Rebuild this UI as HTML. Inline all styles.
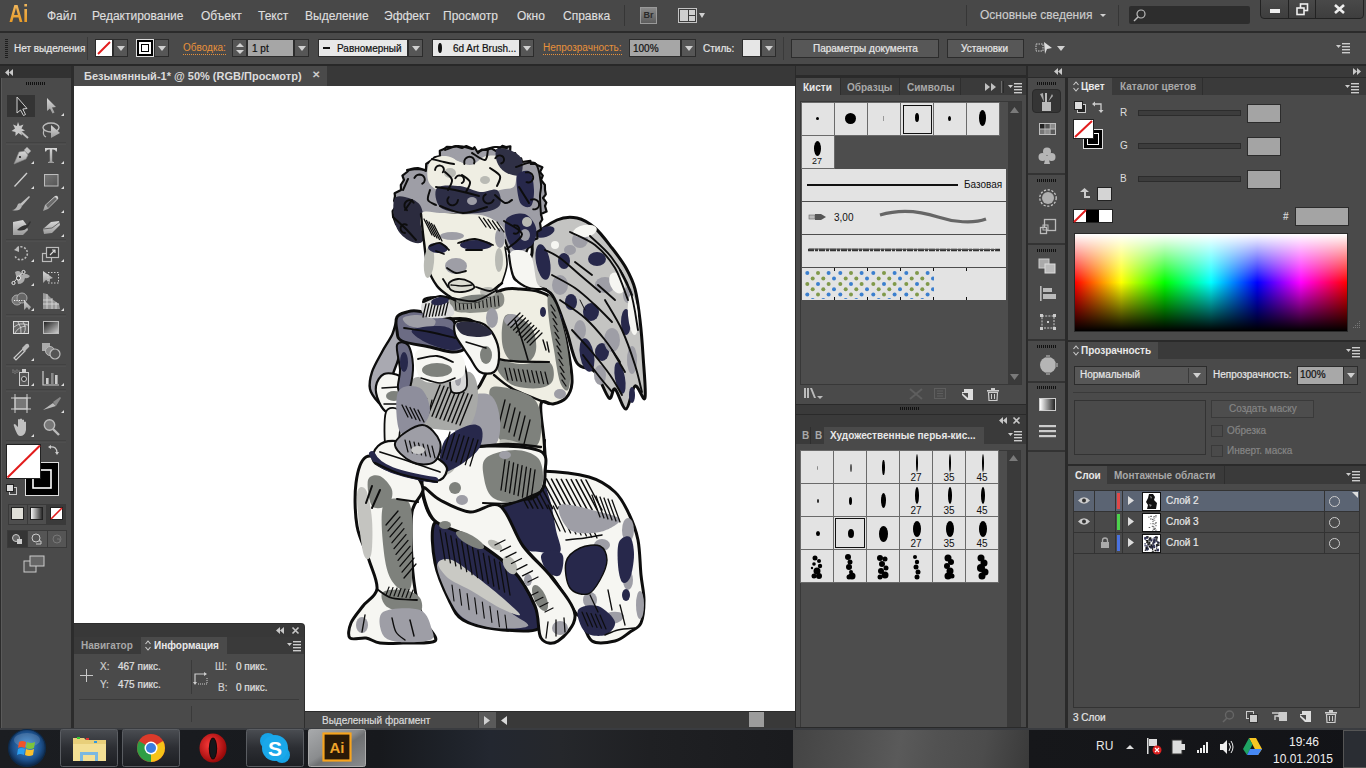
<!DOCTYPE html>
<html><head><meta charset="utf-8">
<style>
*{margin:0;padding:0;box-sizing:border-box}
html,body{width:1366px;height:768px;overflow:hidden;background:#4a4a4a;font-family:"Liberation Sans",sans-serif;color:#d6d6d6;position:relative}
.a{position:absolute}
.t{position:absolute;white-space:nowrap;line-height:1}
.menu{font-size:12px;color:#dedede;top:10px;-webkit-text-stroke:0.15px currentColor}
.cb{font-size:10px;color:#e6e6e6;-webkit-text-stroke:0.2px currentColor}
.or{font-size:10px;color:#e8913a;border-bottom:1px dotted #e8913a;padding-bottom:1px}
.fld{position:absolute;background:#a6a6a6;border:1px solid #2c2c2c}
.btn{position:absolute;background:#565656;border:1px solid #2c2c2c}
.arr{position:absolute;width:0;height:0;border-left:4px solid transparent;border-right:4px solid transparent;border-top:5px solid #d0d0d0}
.tab{position:absolute;font-size:10px;font-weight:bold;color:#a8a8a8;white-space:nowrap;line-height:1}
.act{color:#e8e8e8}
.cell{position:absolute;background:#e3e3e3}
svg{position:absolute;overflow:visible}
</style></head><body>
<!-- ============ MENU BAR ============ -->
<div class="a" style="left:0;top:0;width:1366px;height:31px;background:#484848"></div>
<div class="t" style="left:9px;top:3px;font-size:23px;font-weight:bold;color:#e69f35;transform:scaleX(0.84);transform-origin:0 0;background:linear-gradient(#f0b860,#e8961c);-webkit-background-clip:text;color:transparent">Ai</div>
<div class="t menu" style="left:47px">Файл</div>
<div class="t menu" style="left:92px">Редактирование</div>
<div class="t menu" style="left:201px">Объект</div>
<div class="t menu" style="left:258px">Текст</div>
<div class="t menu" style="left:305px">Выделение</div>
<div class="t menu" style="left:384px">Эффект</div>
<div class="t menu" style="left:443px">Просмотр</div>
<div class="t menu" style="left:517px">Окно</div>
<div class="t menu" style="left:563px">Справка</div>
<div class="a" style="left:624px;top:5px;width:1px;height:21px;background:#363636"></div>
<div class="a" style="left:640px;top:7px;width:17px;height:17px;background:linear-gradient(#8a8a8a,#5c5c5c);border:1px solid #9a9a9a;font-size:9px;color:#2a2a2a;text-align:center;line-height:15px;font-weight:bold">Br</div>
<div class="a" style="left:678px;top:8px;width:19px;height:15px;border:1px solid #c4c4c4;background:#3c3c3c"></div>
<div class="a" style="left:680px;top:10px;width:8px;height:11px;background:#cfcfcf"></div>
<div class="a" style="left:689px;top:10px;width:6px;height:5px;background:#cfcfcf"></div>
<div class="a" style="left:689px;top:16px;width:6px;height:5px;background:#cfcfcf"></div>
<div class="arr" style="left:699px;top:13px;border-width:5px 3px 0 3px"></div>
<div class="a" style="left:966px;top:5px;width:1px;height:21px;background:#363636"></div>
<div class="t menu" style="left:980px;top:9px;color:#cccccc">Основные сведения</div>
<div class="arr" style="left:1100px;top:14px;border-width:3px 3px 0 3px"></div>
<div class="a" style="left:1118px;top:5px;width:1px;height:21px;background:#363636"></div>
<div class="a" style="left:1129px;top:6px;width:121px;height:18px;background:#2d2d2d;border-radius:2px"></div>
<svg style="left:1133px;top:8px" width="14" height="14"><circle cx="8" cy="6" r="4" fill="none" stroke="#bbb" stroke-width="1.2"/><line x1="5" y1="9" x2="1" y2="13" stroke="#bbb" stroke-width="1.5"/></svg>
<!-- window buttons -->
<div class="a" style="left:1260px;top:-3px;width:104px;height:22px;background:linear-gradient(#4a4a4a,#3e3e3e);border:1px solid #222;border-radius:0 0 4px 4px"></div>
<div class="a" style="left:1288px;top:0px;width:1px;height:18px;background:#222"></div>
<div class="a" style="left:1315px;top:0px;width:1px;height:18px;background:#222"></div>
<div class="a" style="left:1270px;top:9px;width:10px;height:4px;background:#eee"></div>
<svg style="left:1296px;top:3px" width="13" height="12"><rect x="4.5" y="1" width="7" height="6.5" fill="none" stroke="#eee" stroke-width="1.6"/><rect x="1" y="5" width="7" height="6.5" fill="#444" stroke="#eee" stroke-width="1.6"/></svg>
<svg style="left:1334px;top:4px" width="11" height="10"><path d="M1 1L10 9M10 1L1 9" stroke="#eee" stroke-width="2.6"/></svg>
<!-- ============ CONTROL BAR ============ -->
<div class="a" style="left:0;top:31px;width:1366px;height:2px;background:#2b2b2b"></div>
<div class="a" style="left:0;top:33px;width:1366px;height:31px;background:#4a4a4a"></div>
<div class="a" style="left:0;top:64px;width:1366px;height:2px;background:#282828"></div>
<div class="a" style="left:5px;top:39px;width:3px;height:19px;background:repeating-linear-gradient(#1e1e1e 0 1px,transparent 1px 2px)"></div>
<div class="t cb" style="left:14px;top:44px">Нет выделения</div>
<div class="a" style="left:87px;top:37px;width:1px;height:23px;background:#3a3a3a"></div>
<div class="a" style="left:95px;top:39px;width:18px;height:18px;background:#fff;border:1px solid #2a2a2a"></div>
<svg style="left:96px;top:40px" width="16" height="16"><line x1="2" y1="14" x2="14" y2="2" stroke="#e21c1c" stroke-width="2"/></svg>
<div class="btn" style="left:113px;top:39px;width:15px;height:18px"></div><div class="arr" style="left:117px;top:46px"></div>
<div class="a" style="left:136px;top:39px;width:18px;height:18px;background:#000;border:1px solid #ddd"></div>
<div class="a" style="left:139px;top:42px;width:12px;height:12px;border:2px solid #fff"></div><div class="a" style="left:142px;top:45px;width:6px;height:6px;background:#fff"></div>
<div class="btn" style="left:154px;top:39px;width:15px;height:18px"></div><div class="arr" style="left:158px;top:46px"></div>
<div class="t or" style="left:183px;top:43px">Обводка:</div>
<div class="btn" style="left:232px;top:39px;width:15px;height:18px"></div>
<div class="arr" style="left:236px;top:43px;border-top:0;border-bottom:4px solid #cfcfcf"></div>
<div class="arr" style="left:236px;top:50px;border-top:4px solid #cfcfcf"></div>
<div class="fld" style="left:247px;top:39px;width:47px;height:18px"></div>
<div class="t cb" style="left:252px;top:44px;color:#111">1 pt</div>
<div class="btn" style="left:294px;top:39px;width:15px;height:18px"></div><div class="arr" style="left:298px;top:46px"></div>
<div class="a" style="left:318px;top:39px;width:90px;height:18px;background:#e8e8e8;border:1px solid #2c2c2c"></div>
<div class="a" style="left:323px;top:47px;width:7px;height:2px;background:#111"></div>
<div class="t cb" style="left:337px;top:44px;color:#111">Равномерный</div>
<div class="btn" style="left:408px;top:39px;width:15px;height:18px"></div><div class="arr" style="left:412px;top:46px"></div>
<div class="a" style="left:432px;top:39px;width:88px;height:18px;background:#e8e8e8;border:1px solid #2c2c2c"></div>
<div class="a" style="left:438px;top:43px;width:4px;height:10px;background:#111;border-radius:50%"></div>
<div class="t cb" style="left:453px;top:44px;color:#111">6d Art Brush...</div>
<div class="btn" style="left:520px;top:39px;width:14px;height:18px"></div><div class="arr" style="left:523px;top:46px"></div>
<div class="t or" style="left:543px;top:43px">Непрозрачность:</div>
<div class="fld" style="left:629px;top:39px;width:52px;height:18px"></div>
<div class="t cb" style="left:633px;top:44px;color:#111">100%</div>
<div class="btn" style="left:681px;top:39px;width:15px;height:18px"></div><div class="arr" style="left:685px;top:46px"></div>
<div class="t cb" style="left:703px;top:44px">Стиль:</div>
<div class="a" style="left:742px;top:39px;width:19px;height:18px;background:#e6e6e6;border:1px solid #2c2c2c"></div>
<div class="btn" style="left:761px;top:39px;width:15px;height:18px"></div><div class="arr" style="left:765px;top:46px"></div>
<div class="a" style="left:783px;top:37px;width:1px;height:23px;background:#3a3a3a"></div>
<div class="btn" style="left:791px;top:39px;width:148px;height:19px;background:#575757"></div>
<div class="t cb" style="left:813px;top:44px">Параметры документа</div>
<div class="btn" style="left:947px;top:39px;width:77px;height:19px;background:#575757"></div>
<div class="t cb" style="left:961px;top:44px">Установки</div>
<svg style="left:1035px;top:41px" width="20" height="14"><rect x="1" y="3" width="7" height="7" fill="none" stroke="#ccc" stroke-dasharray="1.5 1"/><path d="M9 1 L17 7 L12 8 L10 13 Z" fill="#ddd"/></svg>
<div class="arr" style="left:1057px;top:46px"></div>
<svg style="left:1336px;top:43px" width="14" height="10"><path d="M0 2 L5 2 L2.5 5Z" fill="#ccc"/><rect x="6" y="0" width="8" height="1.4" fill="#ccc"/><rect x="6" y="3" width="8" height="1.4" fill="#ccc"/><rect x="6" y="6" width="8" height="1.4" fill="#ccc"/><rect x="6" y="9" width="8" height="1.4" fill="#ccc"/></svg>

<!-- ============ LEFT TOOLBAR ============ -->
<div class="a" style="left:0;top:66px;width:74px;height:662px;background:#2c2c2c"></div>
<div class="a" style="left:0;top:66px;width:71px;height:12px;background:#323232"></div>
<svg style="left:5px;top:69px" width="8" height="7"><path d="M4 0L0 3.5L4 7Z M8 0L4 3.5L8 7Z" fill="#c8c8c8"/></svg>
<div class="a" style="left:1px;top:78px;width:70px;height:650px;background:#4a4a4a;border-left:1px solid #5a5a5a"></div>
<div class="a" style="left:26px;top:82px;width:20px;height:3px;background:repeating-linear-gradient(90deg,#111 0 1px,transparent 1px 2px)"></div>


<svg style="left:0;top:0" width="74" height="728">
<defs><linearGradient id="gi" x1="0" y1="0" x2="0" y2="1"><stop offset="0" stop-color="#d8d8d8"/><stop offset="1" stop-color="#9a9a9a"/></linearGradient>
<linearGradient id="gr" x1="0" y1="0" x2="1" y2="1"><stop offset="0" stop-color="#777"/><stop offset="1" stop-color="#555"/></linearGradient></defs>
<!-- selection active -->
<rect x="7" y="95" width="28" height="22" fill="#343434"/>
<path d="M17 97 L17 113 L20.5 110 L23.5 115.5 L25.5 114.5 L22.8 109 L27 108.5 Z" fill="#2c2c2c" stroke="#d0d0d0" stroke-width="1"/>
<path d="M47 98 L47 111 L50 108.5 L52.5 113.5 L54.5 112.5 L52 107.5 L56 107 Z" fill="url(#gi)"/>
<g fill="#ddd"><path d="M61 116 L64 113 L64 116Z"/><path d="M31 164 L34 161 L34 164Z"/><path d="M61 164 L64 161 L64 164Z"/><path d="M31 189 L34 186 L34 189Z"/><path d="M61 189 L64 186 L64 189Z"/><path d="M61 213 L64 210 L64 213Z"/><path d="M61 237 L64 234 L64 237Z"/><path d="M31 262 L34 259 L34 262Z"/><path d="M61 262 L64 259 L64 262Z"/><path d="M31 286 L34 283 L34 286Z"/><path d="M31 311 L34 308 L34 311Z"/><path d="M61 311 L64 308 L64 311Z"/><path d="M31 361 L34 358 L34 361Z"/><path d="M31 386 L34 383 L34 386Z"/><path d="M61 386 L64 383 L64 386Z"/><path d="M61 413 L64 410 L64 413Z"/><path d="M31 437 L34 434 L34 437Z"/></g>
<!-- magic wand -->
<path d="M18 122 L19.5 126 L23.5 124.5 L21.5 128.5 L25 130.5 L21 131.5 L22 135.5 L18.5 133 L15.5 136 L15.5 132 L11.5 131 L15 128.5 L13 124.5 L16.8 126Z" fill="#c8c8c8"/>
<line x1="20" y1="131" x2="28" y2="138" stroke="#bdbdbd" stroke-width="2"/>
<!-- lasso -->
<ellipse cx="51" cy="127.5" rx="8" ry="4.5" fill="none" stroke="#bbb" stroke-width="1.4"/>
<path d="M44 130 Q42 135 46 137" fill="none" stroke="#bbb" stroke-width="1.2"/>
<path d="M51 125 L51 138 L60 133 Z" fill="url(#gi)"/>
<line x1="6" y1="143" x2="66" y2="143" stroke="#3a3a3a" stroke-width="1"/>
<line x1="6" y1="144" x2="66" y2="144" stroke="#555" stroke-width="1"/>
<!-- pen -->
<path d="M14 164 L19 152 L25 151 L28 155 L26 159 Z" fill="url(#gi)" stroke="#888" stroke-width=".6"/>
<path d="M24 150 L27 147 L31 151 L28 154Z" fill="#c0c0c0"/>
<circle cx="20" cy="157" r="1.1" fill="#222"/>
<!-- T -->
<path d="M45 148 H57 V151.5 H56 Q55.5 149.5 53 149.5 H52.2 V161 Q52.2 162 54 162 V163 H48 V162 Q49.8 162 49.8 161 V149.5 H49 Q46.5 149.5 46 151.5 H45Z" fill="url(#gi)"/>
<!-- line -->
<line x1="14.5" y1="186.5" x2="27" y2="173" stroke="#cfcfcf" stroke-width="1.3"/>
<!-- rect -->
<rect x="44.5" y="174.5" width="13.5" height="11.5" fill="url(#gr)" stroke="#bdbdbd" stroke-width="1"/>
<!-- brush -->
<path d="M20 204 L29 196 L30 197 L22 206Z" fill="#c0c0c0"/>
<path d="M12 210 Q16 210 18 204 Q21 202 22 206 Q20 212 12 210Z" fill="#b5b5b5"/>
<!-- pencil -->
<path d="M43 211 L45 205 L55 196 Q57 195 58 197 Q59 199 57 200 L48 209Z" fill="url(#gi)"/>
<path d="M46 205 L55 197 L57 199 L48 208Z" fill="#6a6a6a"/>
<!-- blob brush -->
<path d="M13 222 L23 220 L26 224 L28 230 L23 235 L13 235Z" fill="url(#gi)"/>
<path d="M17 230 Q22 225 27 225 L30 221 L31 222 L28 227 Q24 232 17 230Z" fill="#333"/>
<!-- eraser -->
<path d="M43 229 L51 222 L59 221 L60 225 L52 233 L44 234Z" fill="url(#gi)"/>
<path d="M43 229 L52 228 L60 222" fill="none" stroke="#666" stroke-width="1"/>
<line x1="6" y1="240" x2="66" y2="240" stroke="#3a3a3a"/><line x1="6" y1="241" x2="66" y2="241" stroke="#555"/>
<!-- rotate -->
<path d="M17 248 A6.5 6.5 0 1 1 15 256" fill="none" stroke="#bbb" stroke-width="1.6" stroke-dasharray="2 1.6"/>
<path d="M14 250 L19 246 L19 252Z" fill="#bbb"/>
<!-- scale -->
<rect x="42.5" y="253.5" width="9" height="8" fill="none" stroke="#bbb" stroke-width="1.2"/>
<rect x="46.5" y="247.5" width="12" height="10" fill="#3c3c3c" stroke="#bbb" stroke-width="1.2"/>
<path d="M50 255 L55 250 M52 250 H55 V253" fill="none" stroke="#ddd" stroke-width="1.1"/>
<!-- puppet/width -->
<path d="M15 272 Q20 269 22 275 Q25 272 30 276 Q28 279 25 278 Q24 284 18 284 Q17 279 15 272Z" fill="#aaa"/>
<path d="M13 283 L24 271" stroke="#ddd" stroke-width="1"/>
<circle cx="13.5" cy="283" r="1.6" fill="#444" stroke="#eee"/><circle cx="18.5" cy="278" r="2" fill="#444" stroke="#eee"/><circle cx="23.5" cy="272" r="1.6" fill="#444" stroke="#eee"/>
<!-- free transform -->
<path d="M43 271 L43 283 L46 280 L50 282 L50 279 L53 278Z" fill="url(#gi)"/>
<rect x="48" y="272.5" width="10.5" height="10.5" fill="none" stroke="#ccc" stroke-dasharray="1.5 1.5"/>
<!-- shape builder -->
<circle cx="17" cy="300" r="5" fill="#777" stroke="#aaa"/><circle cx="22" cy="298" r="5" fill="#666" stroke="#aaa"/>
<path d="M14 300.5 H25" stroke="#eee" stroke-dasharray="1.2 1.2"/>
<path d="M24 300 L24 310 L27 307 L29 310 L31 307 Z" fill="url(#gi)"/>
<!-- perspective -->
<path d="M43 293 L47 294 L52 299 L59 304 L60 309 L43 309Z" fill="#999"/>
<path d="M47 294 V309 M52 298 V309 M56 302 V309 M43 300 H52 M43 304 H59" stroke="#ddd" stroke-width=".8"/>
<line x1="6" y1="315" x2="66" y2="315" stroke="#3a3a3a"/><line x1="6" y1="316" x2="66" y2="316" stroke="#555"/>
<!-- mesh -->
<rect x="13.5" y="321.5" width="15" height="12" fill="#666" stroke="#ddd"/>
<path d="M14 327 Q20 322 28 325 M15 333 Q18 327 26 326 M18 322 Q22 328 21 333 M23 322 Q27 328 24 333" fill="none" stroke="#ddd" stroke-width=".8"/>
<!-- gradient -->
<rect x="43.5" y="321.5" width="15" height="12" fill="none" stroke="#bbb"/>
<defs><linearGradient id="gg" x1="0" y1="0" x2="1" y2="1"><stop offset="0" stop-color="#222"/><stop offset="1" stop-color="#ccc"/></linearGradient></defs>
<rect x="44" y="322" width="14" height="11" fill="url(#gg)"/>
<!-- eyedropper -->
<path d="M14 358 L23 349 L25 351 L16 360Z" fill="none" stroke="#ccc" stroke-width="1.2"/>
<path d="M22 348 L26 344 Q28 343 29 345 Q30 347 28 348 L24 352Z" fill="#bbb"/>
<!-- blend -->
<rect x="42" y="343" width="8" height="8" fill="#aaa"/>
<circle cx="50" cy="351" r="4.5" fill="#888" stroke="#bbb"/>
<circle cx="55" cy="354" r="5" fill="#555" stroke="#bbb" stroke-width="1.2"/>
<line x1="6" y1="365" x2="66" y2="365" stroke="#3a3a3a"/><line x1="6" y1="366" x2="66" y2="366" stroke="#555"/>
<!-- sprayer -->
<g fill="#bbb"><circle cx="13" cy="370" r=".6"/><circle cx="15" cy="371" r=".6"/><circle cx="17" cy="370" r=".6"/><circle cx="19" cy="371" r=".6"/><circle cx="13" cy="372" r=".6"/><circle cx="15" cy="373" r=".6"/><circle cx="17" cy="372" r=".6"/></g>
<rect x="22" y="369" width="4" height="3" fill="#ccc"/>
<rect x="19.5" y="372.5" width="9" height="13" fill="#555" stroke="#ccc"/>
<circle cx="24" cy="379" r="2.5" fill="#333" stroke="#ccc"/>
<!-- column graph -->
<path d="M43 371 V385 H59" fill="none" stroke="#ccc" stroke-width="1.2"/>
<rect x="46" y="378" width="2.6" height="6" fill="#ccc"/><rect x="51" y="373" width="2.6" height="11" fill="#888"/><rect x="55" y="375" width="2.6" height="9" fill="#ccc"/>
<line x1="6" y1="390" x2="66" y2="390" stroke="#3a3a3a"/><line x1="6" y1="391" x2="66" y2="391" stroke="#555"/>
<!-- artboard -->
<rect x="15" y="398" width="12" height="11" fill="#777" stroke="#ccc"/>
<path d="M11 398 H31 M11 409 H31 M15 394 V413 M27 394 V413" stroke="#ccc" stroke-width="1"/>
<!-- slice -->
<path d="M43 410 L53 403 L56 406 Z" fill="#bbb"/><path d="M53 402 L60 397 L61 398 L56 406Z" fill="#888"/>
<!-- hand -->
<path d="M14 426 Q13 424 15 424 L18 427 V420 Q18 419 19 419 Q20 419 20 420 V425 V419 Q21 418 22 419 V425 V420 Q23 419 24 420 V426 V422 Q25 421 26 422 V430 Q25 436 20 436 Q17 436 14 426Z" fill="#c0c0c0"/>
<!-- zoom -->
<circle cx="49.5" cy="425" r="5.2" fill="#777" stroke="#bbb" stroke-width="1.4"/>
<line x1="53" y1="429" x2="59" y2="435" stroke="#bbb" stroke-width="2.4"/>
<line x1="6" y1="441" x2="66" y2="441" stroke="#3a3a3a"/><line x1="6" y1="442" x2="66" y2="442" stroke="#555"/>
<!-- fill/stroke -->
<rect x="25.5" y="462.5" width="33" height="33" fill="#000" stroke="#ddd"/>
<rect x="33" y="470" width="18" height="18" fill="none" stroke="#fff" stroke-width="1.6"/>
<rect x="6.5" y="444.5" width="34" height="34" fill="#fff" stroke="#222"/>
<line x1="7.5" y1="477.5" x2="40" y2="445.5" stroke="#e21c1c" stroke-width="2"/>
<path d="M50 447 Q57 446 57 453" fill="none" stroke="#ccc" stroke-width="1.2"/><path d="M48 447 L51 445 L51 449Z M57 455 L55 452 L59 452Z" fill="#ccc"/>
<rect x="9.5" y="487.5" width="7" height="7" fill="#444" stroke="#ccc"/><rect x="6.5" y="484.5" width="7" height="7" fill="#ddd" stroke="#222"/>
<!-- mode buttons -->
<rect x="8" y="504" width="58" height="21" fill="#3a3a3a"/>
<rect x="9" y="505" width="18" height="19" fill="#4e4e4e"/><rect x="28" y="505" width="18" height="19" fill="#4e4e4e"/><rect x="47" y="505" width="18" height="19" fill="#3a3a3a"/>
<rect x="11.5" y="507.5" width="12" height="12" fill="#e0dfd8" stroke="#222"/>
<defs><linearGradient id="gm" x1="0" y1="0" x2="1" y2="0"><stop offset="0" stop-color="#fff"/><stop offset="1" stop-color="#222"/></linearGradient></defs>
<rect x="30.5" y="507.5" width="12" height="12" fill="url(#gm)" stroke="#222"/>
<rect x="50.5" y="507.5" width="12" height="12" fill="#fff" stroke="#222"/>
<line x1="51" y1="519" x2="62" y2="508" stroke="#e21c1c" stroke-width="1.6"/>
<rect x="7" y="530" width="60" height="18" fill="#3a3a3a"/>
<rect x="8" y="531" width="19" height="16" fill="#353535"/><rect x="28" y="531" width="19" height="16" fill="#555"/><rect x="48" y="531" width="18" height="16" fill="#555"/>
<circle cx="16" cy="538" r="3.5" fill="#666" stroke="#ccc"/><rect x="17" y="539" width="5" height="5" fill="#ccc"/>
<circle cx="36" cy="538" r="4" fill="none" stroke="#ccc"/><path d="M39 541 L41 541 L41 544 L36 544" fill="none" stroke="#ccc"/>
<circle cx="57" cy="539" r="4" fill="none" stroke="#777"/><path d="M57 539 h3 v3" fill="none" stroke="#777"/>
<!-- screen mode -->
<rect x="24" y="561" width="12" height="11" fill="#555" stroke="#ccc"/>
<rect x="30" y="556" width="14" height="10" fill="#666" stroke="#ccc"/>
</svg>

<!-- ============ DOC TAB + CANVAS ============ -->
<div class="a" style="left:74px;top:66px;width:721px;height:20px;background:#383838"></div>
<div class="a" style="left:74px;top:66px;width:253px;height:20px;background:#4a4a4a"></div>
<div class="tab act" style="left:84px;top:71px;font-size:11px;color:#dcdcdc">Безымянный-1* @ 50% (RGB/Просмотр)</div>
<div class="t" style="left:312px;top:70px;font-size:10px;color:#ccc;font-weight:bold">✕</div>
<div class="a" style="left:74px;top:86px;width:721px;height:625px;background:#fff"></div>


<!-- CHERUB -->
<svg id="cherub" style="left:0;top:0" width="1366" height="768"><path d="M531.0,257.0 C534.3,250.3 529.7,243.2 534.0,237.0 C538.3,230.8 549.8,223.2 557.0,220.0 C564.2,216.8 570.7,216.7 577.0,218.0 C583.3,219.3 589.2,223.0 595.0,228.0 C600.8,233.0 606.8,241.3 612.0,248.0 C617.2,254.7 622.2,261.2 626.0,268.0 C629.8,274.8 632.7,280.3 635.0,289.0 C637.3,297.7 638.7,309.0 640.0,320.0 C641.3,331.0 642.2,342.0 643.0,355.0 C643.8,368.0 646.3,392.8 645.0,398.0 C643.7,403.2 638.2,384.2 635.0,386.0 C631.8,387.8 629.3,408.5 626.0,409.0 C622.7,409.5 617.8,390.8 615.0,389.0 C612.2,387.2 612.3,400.8 609.0,398.0 C605.7,395.2 600.3,377.8 595.0,372.0 C589.7,366.2 581.8,370.2 577.0,363.0 C572.2,355.8 570.2,340.3 566.0,329.0 C561.8,317.7 557.3,302.2 552.0,295.0 C546.7,287.8 540.3,289.0 534.0,286.0 C527.7,283.0 514.5,281.8 514.0,277.0 C513.5,272.2 527.7,263.7 531.0,257.0Z" fill="#c4c4c2" stroke="#0d0d0d" stroke-width="3.0" stroke-linejoin="round" stroke-linecap="round"/><ellipse cx="545" cy="232" rx="10" ry="5" fill="#27284b" transform="rotate(-20 545 232)"/><ellipse cx="543" cy="262" rx="7" ry="18" fill="#27284b" transform="rotate(-10 543 262)"/><ellipse cx="564" cy="261" rx="6" ry="8" fill="#27284b" transform="rotate(0 564 261)"/><ellipse cx="597" cy="259" rx="9" ry="7" fill="#27284b" transform="rotate(0 597 259)"/><ellipse cx="571" cy="302" rx="6" ry="8" fill="#27284b" transform="rotate(0 571 302)"/><ellipse cx="591" cy="312" rx="8" ry="9" fill="#27284b" transform="rotate(0 591 312)"/><ellipse cx="626" cy="322" rx="5" ry="13" fill="#27284b" transform="rotate(0 626 322)"/><ellipse cx="587" cy="355" rx="7" ry="17" fill="#27284b" transform="rotate(-10 587 355)"/><ellipse cx="602" cy="352" rx="7" ry="9" fill="#27284b" transform="rotate(0 602 352)"/><ellipse cx="620" cy="378" rx="5" ry="16" fill="#27284b" transform="rotate(-10 620 378)"/><ellipse cx="632" cy="395" rx="3" ry="8" fill="#27284b" transform="rotate(0 632 395)"/><ellipse cx="557" cy="320" rx="5" ry="8" fill="#27284b" transform="rotate(0 557 320)"/><ellipse cx="580" cy="240" rx="8" ry="8" fill="#9e9ea6" transform="rotate(0 580 240)"/><ellipse cx="605" cy="285" rx="10" ry="8" fill="#9e9ea6" transform="rotate(0 605 285)"/><ellipse cx="560" cy="285" rx="8" ry="10" fill="#9e9ea6" transform="rotate(0 560 285)"/><ellipse cx="612" cy="340" rx="8" ry="12" fill="#9e9ea6" transform="rotate(0 612 340)"/><ellipse cx="580" cy="330" rx="6" ry="10" fill="#9e9ea6" transform="rotate(0 580 330)"/><ellipse cx="632" cy="360" rx="5" ry="14" fill="#9e9ea6" transform="rotate(0 632 360)"/><ellipse cx="600" cy="375" rx="6" ry="10" fill="#9e9ea6" transform="rotate(0 600 375)"/><ellipse cx="570" cy="250" rx="6" ry="5" fill="#9e9ea6" transform="rotate(0 570 250)"/><ellipse cx="628" cy="295" rx="5" ry="8" fill="#9e9ea6" transform="rotate(0 628 295)"/><ellipse cx="585" cy="231" rx="12" ry="6" fill="#f6f6f2" transform="rotate(-10 585 231)"/><ellipse cx="617" cy="283" rx="7" ry="11" fill="#f6f6f2" transform="rotate(-25 617 283)"/><ellipse cx="633" cy="315" rx="5" ry="20" fill="#f6f6f2" transform="rotate(-5 633 315)"/><ellipse cx="555" cy="245" rx="4" ry="4" fill="#f6f6f2" transform="rotate(0 555 245)"/><path d="M545.0,250.0 C547.5,251.3 554.2,253.8 560.0,258.0 C565.8,262.2 573.3,269.3 580.0,275.0 C586.7,280.7 596.7,289.2 600.0,292.0" fill="none" stroke="#0d0d0d" stroke-width="1.9" stroke-linecap="round"/><path d="M552.0,275.0 C555.8,277.2 567.8,283.0 575.0,288.0 C582.2,293.0 588.8,299.3 595.0,305.0 C601.2,310.7 609.2,319.2 612.0,322.0" fill="none" stroke="#0d0d0d" stroke-width="1.9" stroke-linecap="round"/><path d="M560.0,300.0 C564.2,303.0 577.5,311.3 585.0,318.0 C592.5,324.7 599.2,332.7 605.0,340.0 C610.8,347.3 617.5,358.3 620.0,362.0" fill="none" stroke="#0d0d0d" stroke-width="1.9" stroke-linecap="round"/><path d="M572.0,330.0 C575.3,333.7 585.7,344.5 592.0,352.0 C598.3,359.5 605.0,367.8 610.0,375.0 C615.0,382.2 620.0,391.7 622.0,395.0" fill="none" stroke="#0d0d0d" stroke-width="1.9" stroke-linecap="round"/><path d="M583.0,355.0 C585.5,358.3 593.2,368.8 598.0,375.0 C602.8,381.2 609.7,389.2 612.0,392.0" fill="none" stroke="#0d0d0d" stroke-width="1.9" stroke-linecap="round"/><path d="M570.0,232.0 C574.2,234.2 587.5,239.0 595.0,245.0 C602.5,251.0 609.5,258.8 615.0,268.0 C620.5,277.2 625.8,294.7 628.0,300.0" fill="none" stroke="#0d0d0d" stroke-width="1.9" stroke-linecap="round"/><path d="M590.0,236.0 C593.7,239.7 605.3,249.0 612.0,258.0 C618.7,267.0 625.7,278.0 630.0,290.0 C634.3,302.0 636.7,323.3 638.0,330.0" fill="none" stroke="#0d0d0d" stroke-width="1.9" stroke-linecap="round"/><path d="M605.0,300.0 C607.8,305.0 617.0,319.2 622.0,330.0 C627.0,340.8 631.7,354.7 635.0,365.0 C638.3,375.3 640.8,387.5 642.0,392.0" fill="none" stroke="#0d0d0d" stroke-width="1.9" stroke-linecap="round"/><path d="M620.0,270.0 C622.0,274.2 630.0,290.8 632.0,295.0" fill="none" stroke="#0d0d0d" stroke-width="1.9" stroke-linecap="round"/><path d="M598.0,285.0 C600.8,287.5 612.2,297.5 615.0,300.0" fill="none" stroke="#0d0d0d" stroke-width="1.9" stroke-linecap="round"/><path d="M575.0,262.0 C577.8,264.2 589.2,272.8 592.0,275.0" fill="none" stroke="#0d0d0d" stroke-width="1.9" stroke-linecap="round"/><path d="M612.0,350.0 C614.2,353.7 622.8,368.3 625.0,372.0" fill="none" stroke="#0d0d0d" stroke-width="1.9" stroke-linecap="round"/><path d="M500.0,474.0 C506.7,468.2 525.2,470.5 540.0,471.0 C554.8,471.5 576.5,473.5 589.0,477.0 C601.5,480.5 608.3,485.8 615.0,492.0 C621.7,498.2 625.2,506.0 629.0,514.0 C632.8,522.0 636.0,529.8 638.0,540.0 C640.0,550.2 640.0,565.0 641.0,575.0 C642.0,585.0 644.0,592.0 644.0,600.0 C644.0,608.0 643.3,617.7 641.0,623.0 C638.7,628.3 634.3,629.0 630.0,632.0 C625.7,635.0 621.3,639.5 615.0,641.0 C608.7,642.5 597.7,644.8 592.0,641.0 C586.3,637.2 583.8,622.8 581.0,618.0 C578.2,613.2 579.8,618.8 575.0,612.0 C570.2,605.2 560.7,588.0 552.0,577.0 C543.3,566.0 531.7,557.8 523.0,546.0 C514.3,534.2 503.8,518.0 500.0,506.0 C496.2,494.0 493.3,479.8 500.0,474.0Z" fill="#f6f6f2" stroke="#0d0d0d" stroke-width="3.0" stroke-linejoin="round" stroke-linecap="round"/><path d="M502.0,480.0 C505.3,474.7 513.7,474.3 520.0,474.0 C526.3,473.7 535.0,473.7 540.0,478.0 C545.0,482.3 547.3,491.3 550.0,500.0 C552.7,508.7 554.3,521.3 556.0,530.0 C557.7,538.7 562.7,548.3 560.0,552.0 C557.3,555.7 546.2,553.0 540.0,552.0 C533.8,551.0 529.7,553.7 523.0,546.0 C516.3,538.3 503.5,517.0 500.0,506.0 C496.5,495.0 498.7,485.3 502.0,480.0Z" fill="#27284b"/><path d="M512.0,478.0 l16,30" stroke="#0d0d0d" stroke-width="1.5" stroke-linecap="round"/><path d="M516.9,478.1 l16,30" stroke="#0d0d0d" stroke-width="1.5" stroke-linecap="round"/><path d="M521.9,478.3 l16,30" stroke="#0d0d0d" stroke-width="1.5" stroke-linecap="round"/><path d="M526.8,478.4 l16,30" stroke="#0d0d0d" stroke-width="1.5" stroke-linecap="round"/><path d="M531.7,478.5 l16,30" stroke="#0d0d0d" stroke-width="1.5" stroke-linecap="round"/><path d="M536.7,478.7 l16,30" stroke="#0d0d0d" stroke-width="1.5" stroke-linecap="round"/><path d="M541.6,478.8 l16,30" stroke="#0d0d0d" stroke-width="1.5" stroke-linecap="round"/><path d="M546.5,478.9 l16,30" stroke="#0d0d0d" stroke-width="1.5" stroke-linecap="round"/><path d="M551.5,479.1 l16,30" stroke="#0d0d0d" stroke-width="1.5" stroke-linecap="round"/><path d="M556.4,479.2 l16,30" stroke="#0d0d0d" stroke-width="1.5" stroke-linecap="round"/><path d="M561.3,479.3 l16,30" stroke="#0d0d0d" stroke-width="1.5" stroke-linecap="round"/><path d="M566.3,479.5 l16,30" stroke="#0d0d0d" stroke-width="1.5" stroke-linecap="round"/><path d="M571.2,479.6 l16,30" stroke="#0d0d0d" stroke-width="1.5" stroke-linecap="round"/><path d="M576.1,479.7 l16,30" stroke="#0d0d0d" stroke-width="1.5" stroke-linecap="round"/><path d="M581.1,479.9 l16,30" stroke="#0d0d0d" stroke-width="1.5" stroke-linecap="round"/><path d="M586.0,480.0 l16,30" stroke="#0d0d0d" stroke-width="1.5" stroke-linecap="round"/><path d="M548.0,505.0 l12,26" stroke="#0d0d0d" stroke-width="1.3" stroke-linecap="round"/><path d="M553.3,506.0 l12,26" stroke="#0d0d0d" stroke-width="1.3" stroke-linecap="round"/><path d="M558.6,507.0 l12,26" stroke="#0d0d0d" stroke-width="1.3" stroke-linecap="round"/><path d="M563.9,508.0 l12,26" stroke="#0d0d0d" stroke-width="1.3" stroke-linecap="round"/><path d="M569.1,509.0 l12,26" stroke="#0d0d0d" stroke-width="1.3" stroke-linecap="round"/><path d="M574.4,510.0 l12,26" stroke="#0d0d0d" stroke-width="1.3" stroke-linecap="round"/><path d="M579.7,511.0 l12,26" stroke="#0d0d0d" stroke-width="1.3" stroke-linecap="round"/><path d="M585.0,512.0 l12,26" stroke="#0d0d0d" stroke-width="1.3" stroke-linecap="round"/><path d="M560.0,505.0 C565.0,502.0 590.0,509.5 600.0,512.0 C610.0,514.5 620.0,516.7 620.0,520.0 C620.0,523.3 608.3,530.3 600.0,532.0 C591.7,533.7 576.7,534.5 570.0,530.0 C563.3,525.5 555.0,508.0 560.0,505.0Z" fill="#9e9ea6"/><path d="M592.0,495.0 l8,22" stroke="#0d0d0d" stroke-width="1.3" stroke-linecap="round"/><path d="M596.0,496.0 l8,22" stroke="#0d0d0d" stroke-width="1.3" stroke-linecap="round"/><path d="M600.0,497.0 l8,22" stroke="#0d0d0d" stroke-width="1.3" stroke-linecap="round"/><path d="M604.0,498.0 l8,22" stroke="#0d0d0d" stroke-width="1.3" stroke-linecap="round"/><path d="M608.0,499.0 l8,22" stroke="#0d0d0d" stroke-width="1.3" stroke-linecap="round"/><path d="M612.0,500.0 l8,22" stroke="#0d0d0d" stroke-width="1.3" stroke-linecap="round"/><ellipse cx="628" cy="530" rx="6" ry="12" fill="#9e9ea6" transform="rotate(0 628 530)"/><ellipse cx="640" cy="605" rx="4" ry="14" fill="#9e9ea6" transform="rotate(0 640 605)"/><ellipse cx="612" cy="618" rx="12" ry="6" fill="#9e9ea6" transform="rotate(-10 612 618)"/><ellipse cx="590" cy="600" rx="7" ry="8" fill="#9e9ea6" transform="rotate(0 590 600)"/><ellipse cx="602" cy="545" rx="8" ry="6" fill="#9e9ea6" transform="rotate(0 602 545)"/><ellipse cx="628" cy="580" rx="5" ry="10" fill="#9e9ea6" transform="rotate(0 628 580)"/><path d="M566.0,562.0 C567.7,555.3 574.3,550.7 580.0,548.0 C585.7,545.3 595.5,544.0 600.0,546.0 C604.5,548.0 607.0,554.3 607.0,560.0 C607.0,565.7 603.2,574.3 600.0,580.0 C596.8,585.7 593.0,592.7 588.0,594.0 C583.0,595.3 573.7,593.3 570.0,588.0 C566.3,582.7 564.3,568.7 566.0,562.0Z" fill="#27284b" stroke="#0d0d0d" stroke-width="1.4" stroke-linejoin="round" stroke-linecap="round"/><path d="M619.0,542.0 C621.0,537.3 627.5,534.8 630.0,537.0 C632.5,539.2 634.0,548.2 634.0,555.0 C634.0,561.8 632.0,573.5 630.0,578.0 C628.0,582.5 624.0,584.2 622.0,582.0 C620.0,579.8 618.5,571.7 618.0,565.0 C617.5,558.3 617.0,546.7 619.0,542.0Z" fill="#27284b"/><ellipse cx="626" cy="595" rx="4" ry="6" fill="#27284b" transform="rotate(0 626 595)"/><path d="M541.0,556.0 C541.7,552.3 548.3,550.0 552.0,550.0 C555.7,550.0 561.7,551.8 563.0,556.0 C564.3,560.2 562.5,572.3 560.0,575.0 C557.5,577.7 551.2,575.2 548.0,572.0 C544.8,568.8 540.3,559.7 541.0,556.0Z" fill="#27284b"/><path d="M578.0,610.0 C580.2,605.7 591.8,604.0 598.0,606.0 C604.2,608.0 613.8,617.2 615.0,622.0 C616.2,626.8 610.0,633.3 605.0,635.0 C600.0,636.7 589.5,636.2 585.0,632.0 C580.5,627.8 575.8,614.3 578.0,610.0Z" fill="#27284b"/><path d="M582.0,612.0 l6,14" stroke="#0d0d0d" stroke-width="1.2" stroke-linecap="round"/><path d="M586.5,612.8 l6,14" stroke="#0d0d0d" stroke-width="1.2" stroke-linecap="round"/><path d="M591.0,613.5 l6,14" stroke="#0d0d0d" stroke-width="1.2" stroke-linecap="round"/><path d="M595.5,614.2 l6,14" stroke="#0d0d0d" stroke-width="1.2" stroke-linecap="round"/><path d="M600.0,615.0 l6,14" stroke="#0d0d0d" stroke-width="1.2" stroke-linecap="round"/><path d="M566.0,540.0 C569.2,539.7 579.0,538.8 585.0,538.0 C591.0,537.2 599.2,535.5 602.0,535.0" fill="none" stroke="#0d0d0d" stroke-width="1.6" stroke-linecap="round"/><path d="M605.0,635.0 C607.2,634.2 613.0,631.2 618.0,630.0 C623.0,628.8 632.2,628.3 635.0,628.0" fill="none" stroke="#0d0d0d" stroke-width="1.6" stroke-linecap="round"/><path d="M590.0,595.0 C591.3,597.8 596.7,609.2 598.0,612.0" fill="none" stroke="#0d0d0d" stroke-width="1.3" stroke-linecap="round"/><path d="M608.0,590.0 C608.7,593.3 611.3,606.7 612.0,610.0" fill="none" stroke="#0d0d0d" stroke-width="1.3" stroke-linecap="round"/><path d="M620.0,605.0 C620.8,608.3 624.2,621.7 625.0,625.0" fill="none" stroke="#0d0d0d" stroke-width="1.3" stroke-linecap="round"/><path d="M434.0,524.0 C437.2,517.8 448.2,523.8 454.0,526.0 C459.8,528.2 459.3,529.8 469.0,537.0 C478.7,544.2 501.0,557.5 512.0,569.0 C523.0,580.5 530.7,596.0 535.0,606.0 C539.3,616.0 544.7,625.2 538.0,629.0 C531.3,632.8 507.5,630.5 495.0,629.0 C482.5,627.5 470.7,624.8 463.0,620.0 C455.3,615.2 453.7,609.5 449.0,600.0 C444.3,590.5 437.5,575.7 435.0,563.0 C432.5,550.3 430.8,530.2 434.0,524.0Z" fill="#27284b" stroke="#0d0d0d" stroke-width="3.0" stroke-linejoin="round" stroke-linecap="round"/><path d="M437.0,565.0 C437.8,559.3 447.0,562.2 455.0,566.0 C463.0,569.8 475.8,580.3 485.0,588.0 C494.2,595.7 502.8,605.7 510.0,612.0 C517.2,618.3 530.5,623.3 528.0,626.0 C525.5,628.7 505.5,629.2 495.0,628.0 C484.5,626.8 472.5,623.7 465.0,619.0 C457.5,614.3 454.7,609.0 450.0,600.0 C445.3,591.0 436.2,570.7 437.0,565.0Z" fill="#9e9ea6"/><path d="M438.0,563.0 C438.7,560.0 445.3,557.5 452.0,560.0 C458.7,562.5 469.2,571.3 478.0,578.0 C486.8,584.7 498.0,593.8 505.0,600.0 C512.0,606.2 520.8,613.7 520.0,615.0 C519.2,616.3 508.3,612.2 500.0,608.0 C491.7,603.8 478.7,595.0 470.0,590.0 C461.3,585.0 453.3,582.5 448.0,578.0 C442.7,573.5 437.3,566.0 438.0,563.0Z" fill="#c9c9c4"/><path d="M440.0,530.0 l5,30" stroke="#0d0d0d" stroke-width="1.3" stroke-linecap="round"/><path d="M445.4,532.9 l5,30" stroke="#0d0d0d" stroke-width="1.3" stroke-linecap="round"/><path d="M450.8,535.8 l5,30" stroke="#0d0d0d" stroke-width="1.3" stroke-linecap="round"/><path d="M456.2,538.8 l5,30" stroke="#0d0d0d" stroke-width="1.3" stroke-linecap="round"/><path d="M461.7,541.7 l5,30" stroke="#0d0d0d" stroke-width="1.3" stroke-linecap="round"/><path d="M467.1,544.6 l5,30" stroke="#0d0d0d" stroke-width="1.3" stroke-linecap="round"/><path d="M472.5,547.5 l5,30" stroke="#0d0d0d" stroke-width="1.3" stroke-linecap="round"/><path d="M477.9,550.4 l5,30" stroke="#0d0d0d" stroke-width="1.3" stroke-linecap="round"/><path d="M483.3,553.3 l5,30" stroke="#0d0d0d" stroke-width="1.3" stroke-linecap="round"/><path d="M488.8,556.2 l5,30" stroke="#0d0d0d" stroke-width="1.3" stroke-linecap="round"/><path d="M494.2,559.2 l5,30" stroke="#0d0d0d" stroke-width="1.3" stroke-linecap="round"/><path d="M499.6,562.1 l5,30" stroke="#0d0d0d" stroke-width="1.3" stroke-linecap="round"/><path d="M505.0,565.0 l5,30" stroke="#0d0d0d" stroke-width="1.3" stroke-linecap="round"/><path d="M452.0,585.0 l2,16" stroke="#0d0d0d" stroke-width="1.1" stroke-linecap="round"/><path d="M459.6,589.3 l2,16" stroke="#0d0d0d" stroke-width="1.1" stroke-linecap="round"/><path d="M467.1,593.6 l2,16" stroke="#0d0d0d" stroke-width="1.1" stroke-linecap="round"/><path d="M474.7,597.9 l2,16" stroke="#0d0d0d" stroke-width="1.1" stroke-linecap="round"/><path d="M482.3,602.1 l2,16" stroke="#0d0d0d" stroke-width="1.1" stroke-linecap="round"/><path d="M489.9,606.4 l2,16" stroke="#0d0d0d" stroke-width="1.1" stroke-linecap="round"/><path d="M497.4,610.7 l2,16" stroke="#0d0d0d" stroke-width="1.1" stroke-linecap="round"/><path d="M505.0,615.0 l2,16" stroke="#0d0d0d" stroke-width="1.1" stroke-linecap="round"/><path d="M424.0,300.0 C425.2,296.7 438.7,297.3 447.0,298.0 C455.3,298.7 464.8,305.3 474.0,304.0 C483.2,302.7 494.3,292.5 502.0,290.0 C509.7,287.5 513.7,288.7 520.0,289.0 C526.3,289.3 534.7,290.2 540.0,292.0 C545.3,293.8 548.3,294.5 552.0,300.0 C555.7,305.5 559.2,315.8 562.0,325.0 C564.8,334.2 567.3,345.3 569.0,355.0 C570.7,364.7 572.5,375.8 572.0,383.0 C571.5,390.2 569.2,394.5 566.0,398.0 C562.8,401.5 557.2,403.0 553.0,404.0 C548.8,405.0 542.5,398.0 541.0,404.0 C539.5,410.0 543.3,429.0 544.0,440.0 C544.7,451.0 546.2,460.8 545.0,470.0 C543.8,479.2 542.8,490.0 537.0,495.0 C531.2,500.0 521.2,499.5 510.0,500.0 C498.8,500.5 481.7,501.3 470.0,498.0 C458.3,494.7 446.7,485.5 440.0,480.0 C433.3,474.5 427.5,471.7 430.0,465.0 C432.5,458.3 449.7,450.8 455.0,440.0 C460.3,429.2 457.8,409.2 462.0,400.0 C466.2,390.8 474.5,394.7 480.0,385.0 C485.5,375.3 496.7,352.8 495.0,342.0 C493.3,331.2 479.2,324.0 470.0,320.0 C460.8,316.0 447.7,321.3 440.0,318.0 C432.3,314.7 422.8,303.3 424.0,300.0Z" fill="#efeee3" stroke="#0d0d0d" stroke-width="3.0" stroke-linejoin="round" stroke-linecap="round"/><path d="M451.0,296.0 C454.3,294.7 466.8,303.7 475.0,303.0 C483.2,302.3 495.3,291.7 500.0,292.0 C504.7,292.3 505.5,301.7 503.0,305.0 C500.5,308.3 493.0,311.0 485.0,312.0 C477.0,313.0 460.7,313.7 455.0,311.0 C449.3,308.3 447.7,297.3 451.0,296.0Z" fill="#8b8d87"/><path d="M455.0,300.0 l1,10" stroke="#0d0d0d" stroke-width="1.0" stroke-linecap="round"/><path d="M458.9,299.6 l1,10" stroke="#0d0d0d" stroke-width="1.0" stroke-linecap="round"/><path d="M462.8,299.3 l1,10" stroke="#0d0d0d" stroke-width="1.0" stroke-linecap="round"/><path d="M466.7,298.9 l1,10" stroke="#0d0d0d" stroke-width="1.0" stroke-linecap="round"/><path d="M470.6,298.5 l1,10" stroke="#0d0d0d" stroke-width="1.0" stroke-linecap="round"/><path d="M474.5,298.2 l1,10" stroke="#0d0d0d" stroke-width="1.0" stroke-linecap="round"/><path d="M478.5,297.8 l1,10" stroke="#0d0d0d" stroke-width="1.0" stroke-linecap="round"/><path d="M482.4,297.5 l1,10" stroke="#0d0d0d" stroke-width="1.0" stroke-linecap="round"/><path d="M486.3,297.1 l1,10" stroke="#0d0d0d" stroke-width="1.0" stroke-linecap="round"/><path d="M490.2,296.7 l1,10" stroke="#0d0d0d" stroke-width="1.0" stroke-linecap="round"/><path d="M494.1,296.4 l1,10" stroke="#0d0d0d" stroke-width="1.0" stroke-linecap="round"/><path d="M498.0,296.0 l1,10" stroke="#0d0d0d" stroke-width="1.0" stroke-linecap="round"/><path d="M505.0,316.0 C508.0,312.0 515.3,315.7 520.0,318.0 C524.7,320.3 530.3,324.7 533.0,330.0 C535.7,335.3 536.8,344.7 536.0,350.0 C535.2,355.3 532.3,360.3 528.0,362.0 C523.7,363.7 514.3,363.3 510.0,360.0 C505.7,356.7 502.8,349.3 502.0,342.0 C501.2,334.7 502.0,320.0 505.0,316.0Z" fill="#7e817c"/><ellipse cx="512" cy="320" rx="8" ry="6" fill="#9e9ea6" transform="rotate(0 512 320)"/><path d="M508.0,325.0 l12,-12" stroke="#0d0d0d" stroke-width="1.3" stroke-linecap="round"/><path d="M510.8,327.5 l12,-12" stroke="#0d0d0d" stroke-width="1.3" stroke-linecap="round"/><path d="M513.5,330.0 l12,-12" stroke="#0d0d0d" stroke-width="1.3" stroke-linecap="round"/><path d="M516.2,332.5 l12,-12" stroke="#0d0d0d" stroke-width="1.3" stroke-linecap="round"/><path d="M519.0,335.0 l12,-12" stroke="#0d0d0d" stroke-width="1.3" stroke-linecap="round"/><path d="M521.8,337.5 l12,-12" stroke="#0d0d0d" stroke-width="1.3" stroke-linecap="round"/><path d="M524.5,340.0 l12,-12" stroke="#0d0d0d" stroke-width="1.3" stroke-linecap="round"/><path d="M527.2,342.5 l12,-12" stroke="#0d0d0d" stroke-width="1.3" stroke-linecap="round"/><path d="M530.0,345.0 l12,-12" stroke="#0d0d0d" stroke-width="1.3" stroke-linecap="round"/><path d="M515.0,320.0 C516.2,323.3 519.8,333.3 522.0,340.0 C524.2,346.7 527.0,356.7 528.0,360.0" fill="none" stroke="#0d0d0d" stroke-width="1.6" stroke-linecap="round"/><path d="M548.0,296.0 C549.2,293.5 553.2,298.5 556.0,305.0 C558.8,311.5 562.7,324.2 565.0,335.0 C567.3,345.8 569.5,360.8 570.0,370.0 C570.5,379.2 569.7,388.0 568.0,390.0 C566.3,392.0 562.3,388.7 560.0,382.0 C557.7,375.3 555.8,360.3 554.0,350.0 C552.2,339.7 550.0,329.0 549.0,320.0 C548.0,311.0 546.8,298.5 548.0,296.0Z" fill="#7e817c"/><path d="M551.0,305.0 l4,6" stroke="#0d0d0d" stroke-width="1.2" stroke-linecap="round"/><path d="M552.0,311.8 l4,6" stroke="#0d0d0d" stroke-width="1.2" stroke-linecap="round"/><path d="M553.0,318.6 l4,6" stroke="#0d0d0d" stroke-width="1.2" stroke-linecap="round"/><path d="M554.0,325.5 l4,6" stroke="#0d0d0d" stroke-width="1.2" stroke-linecap="round"/><path d="M555.0,332.3 l4,6" stroke="#0d0d0d" stroke-width="1.2" stroke-linecap="round"/><path d="M556.0,339.1 l4,6" stroke="#0d0d0d" stroke-width="1.2" stroke-linecap="round"/><path d="M557.0,345.9 l4,6" stroke="#0d0d0d" stroke-width="1.2" stroke-linecap="round"/><path d="M558.0,352.7 l4,6" stroke="#0d0d0d" stroke-width="1.2" stroke-linecap="round"/><path d="M559.0,359.5 l4,6" stroke="#0d0d0d" stroke-width="1.2" stroke-linecap="round"/><path d="M560.0,366.4 l4,6" stroke="#0d0d0d" stroke-width="1.2" stroke-linecap="round"/><path d="M561.0,373.2 l4,6" stroke="#0d0d0d" stroke-width="1.2" stroke-linecap="round"/><path d="M562.0,380.0 l4,6" stroke="#0d0d0d" stroke-width="1.2" stroke-linecap="round"/><ellipse cx="560" cy="394" rx="6" ry="5" fill="#9e9ea6" transform="rotate(0 560 394)"/><ellipse cx="492" cy="318" rx="6" ry="10" fill="#9e9ea6" transform="rotate(0 492 318)"/><ellipse cx="520" cy="378" rx="5" ry="4" fill="#c8c9c2" transform="rotate(0 520 378)"/><ellipse cx="543" cy="312" rx="3" ry="5" fill="#27284b" transform="rotate(0 543 312)"/><path d="M496.0,360.0 C499.3,358.3 511.2,363.7 520.0,364.0 C528.8,364.3 543.5,359.3 549.0,362.0 C554.5,364.7 554.5,375.7 553.0,380.0 C551.5,384.3 546.3,387.0 540.0,388.0 C533.7,389.0 521.7,388.3 515.0,386.0 C508.3,383.7 503.2,378.3 500.0,374.0 C496.8,369.7 492.7,361.7 496.0,360.0Z" fill="#7e817c"/><path d="M505.0,368.0 l3,12" stroke="#0d0d0d" stroke-width="1.2" stroke-linecap="round"/><path d="M509.4,368.4 l3,12" stroke="#0d0d0d" stroke-width="1.2" stroke-linecap="round"/><path d="M513.9,368.9 l3,12" stroke="#0d0d0d" stroke-width="1.2" stroke-linecap="round"/><path d="M518.3,369.3 l3,12" stroke="#0d0d0d" stroke-width="1.2" stroke-linecap="round"/><path d="M522.8,369.8 l3,12" stroke="#0d0d0d" stroke-width="1.2" stroke-linecap="round"/><path d="M527.2,370.2 l3,12" stroke="#0d0d0d" stroke-width="1.2" stroke-linecap="round"/><path d="M531.7,370.7 l3,12" stroke="#0d0d0d" stroke-width="1.2" stroke-linecap="round"/><path d="M536.1,371.1 l3,12" stroke="#0d0d0d" stroke-width="1.2" stroke-linecap="round"/><path d="M540.6,371.6 l3,12" stroke="#0d0d0d" stroke-width="1.2" stroke-linecap="round"/><path d="M545.0,372.0 l3,12" stroke="#0d0d0d" stroke-width="1.2" stroke-linecap="round"/><path d="M458.0,324.0 C461.7,325.0 473.7,324.3 480.0,330.0 C486.3,335.7 484.5,352.7 496.0,358.0 C507.5,363.3 540.2,361.3 549.0,362.0" fill="none" stroke="#0d0d0d" stroke-width="2.2" stroke-linecap="round"/><path d="M494.0,375.0 C497.2,377.3 503.8,384.2 513.0,389.0 C522.2,393.8 543.0,401.5 549.0,404.0" fill="none" stroke="#0d0d0d" stroke-width="2.4" stroke-linecap="round"/><path d="M580.0,300.0 C580.8,301.7 584.2,308.3 585.0,310.0" fill="none" stroke="#0d0d0d" stroke-width="1.0" stroke-linecap="round"/><path d="M543.0,340.0 C543.5,341.7 545.5,348.3 546.0,350.0" fill="none" stroke="#0d0d0d" stroke-width="1.4" stroke-linecap="round"/><path d="M547.0,342.0 C547.3,343.7 548.7,350.3 549.0,352.0" fill="none" stroke="#0d0d0d" stroke-width="1.4" stroke-linecap="round"/><path d="M491.0,388.0 C494.8,384.7 507.7,388.0 515.0,390.0 C522.3,392.0 530.7,395.0 535.0,400.0 C539.3,405.0 540.5,412.7 541.0,420.0 C541.5,427.3 541.5,439.0 538.0,444.0 C534.5,449.0 526.3,450.7 520.0,450.0 C513.7,449.3 504.7,446.7 500.0,440.0 C495.3,433.3 493.5,418.7 492.0,410.0 C490.5,401.3 487.2,391.3 491.0,388.0Z" fill="#7e817c"/><path d="M505.0,400.0 l-6,24" stroke="#0d0d0d" stroke-width="1.3" stroke-linecap="round"/><path d="M510.0,404.0 l-6,24" stroke="#0d0d0d" stroke-width="1.3" stroke-linecap="round"/><path d="M515.0,408.0 l-6,24" stroke="#0d0d0d" stroke-width="1.3" stroke-linecap="round"/><path d="M520.0,412.0 l-6,24" stroke="#0d0d0d" stroke-width="1.3" stroke-linecap="round"/><path d="M525.0,416.0 l-6,24" stroke="#0d0d0d" stroke-width="1.3" stroke-linecap="round"/><path d="M530.0,420.0 l-6,24" stroke="#0d0d0d" stroke-width="1.3" stroke-linecap="round"/><path d="M462.0,400.0 C467.8,394.2 483.7,391.7 490.0,395.0 C496.3,398.3 499.2,411.7 500.0,420.0 C500.8,428.3 500.0,440.0 495.0,445.0 C490.0,450.0 476.7,452.5 470.0,450.0 C463.3,447.5 456.3,438.3 455.0,430.0 C453.7,421.7 456.2,405.8 462.0,400.0Z" fill="#9e9ea6"/><path d="M500.0,440.0 C502.5,437.2 518.2,442.5 525.0,445.0 C531.8,447.5 539.0,450.8 541.0,455.0 C543.0,459.2 542.2,468.8 537.0,470.0 C531.8,471.2 516.2,467.0 510.0,462.0 C503.8,457.0 497.5,442.8 500.0,440.0Z" fill="#b9bab4"/><ellipse cx="470" cy="470" rx="18" ry="8" fill="#b9bab4" transform="rotate(0 470 470)"/><path d="M545.0,440.0 C544.5,445.0 542.5,465.0 542.0,470.0" fill="none" stroke="#0d0d0d" stroke-width="2.0" stroke-linecap="round"/><path d="M423.0,478.0 C420.3,486.0 422.2,493.0 424.0,500.0 C425.8,507.0 428.8,515.7 434.0,520.0 C439.2,524.3 447.3,526.8 455.0,526.0 C462.7,525.2 470.5,518.8 480.0,515.0 C489.5,511.2 502.0,506.8 512.0,503.0 C522.0,499.2 534.5,497.2 540.0,492.0 C545.5,486.8 545.0,478.8 545.0,472.0 C545.0,465.2 549.3,455.3 540.0,451.0 C530.7,446.7 505.7,445.8 489.0,446.0 C472.3,446.2 451.0,446.7 440.0,452.0 C429.0,457.3 425.7,470.0 423.0,478.0Z" fill="#f6f6f2" stroke="#0d0d0d" stroke-width="3.0" stroke-linejoin="round" stroke-linecap="round"/><path d="M486.0,458.0 C491.2,453.3 506.3,450.0 515.0,450.0 C523.7,450.0 533.3,453.0 538.0,458.0 C542.7,463.0 543.3,474.0 543.0,480.0 C542.7,486.0 541.2,490.3 536.0,494.0 C530.8,497.7 519.3,501.5 512.0,502.0 C504.7,502.5 496.7,501.0 492.0,497.0 C487.3,493.0 485.0,484.5 484.0,478.0 C483.0,471.5 480.8,462.7 486.0,458.0Z" fill="#7e817c"/><path d="M505.0,460.0 l-4,30" stroke="#0d0d0d" stroke-width="1.3" stroke-linecap="round"/><path d="M509.3,461.4 l-4,30" stroke="#0d0d0d" stroke-width="1.3" stroke-linecap="round"/><path d="M513.6,462.9 l-4,30" stroke="#0d0d0d" stroke-width="1.3" stroke-linecap="round"/><path d="M517.9,464.3 l-4,30" stroke="#0d0d0d" stroke-width="1.3" stroke-linecap="round"/><path d="M522.1,465.7 l-4,30" stroke="#0d0d0d" stroke-width="1.3" stroke-linecap="round"/><path d="M526.4,467.1 l-4,30" stroke="#0d0d0d" stroke-width="1.3" stroke-linecap="round"/><path d="M530.7,468.6 l-4,30" stroke="#0d0d0d" stroke-width="1.3" stroke-linecap="round"/><path d="M535.0,470.0 l-4,30" stroke="#0d0d0d" stroke-width="1.3" stroke-linecap="round"/><ellipse cx="445" cy="470" rx="10" ry="5" fill="#b9bab4" transform="rotate(-20 445 470)"/><ellipse cx="436" cy="505" rx="8" ry="8" fill="#9e9ea6" transform="rotate(0 436 505)"/><ellipse cx="462" cy="500" rx="6" ry="5" fill="#9e9ea6" transform="rotate(0 462 500)"/><ellipse cx="505" cy="455" rx="6" ry="4" fill="#9e9ea6" transform="rotate(0 505 455)"/><ellipse cx="455" cy="488" rx="6" ry="6" fill="#7e817c" transform="rotate(0 455 488)"/><path d="M436.0,462.0 C441.7,459.8 458.3,452.0 470.0,449.0 C481.7,446.0 494.2,444.3 506.0,444.0 C517.8,443.7 535.2,446.5 541.0,447.0" fill="none" stroke="#0d0d0d" stroke-width="2.4" stroke-linecap="round"/><path d="M483.0,503.0 C487.8,503.0 502.5,504.8 512.0,503.0 C521.5,501.2 535.3,493.8 540.0,492.0" fill="none" stroke="#0d0d0d" stroke-width="2.2" stroke-linecap="round"/><path d="M423.0,488.0 C422.0,491.3 426.3,511.8 434.0,520.0 C441.7,528.2 456.0,528.8 469.0,537.0 C482.0,545.2 501.0,557.5 512.0,569.0 C523.0,580.5 530.2,594.5 535.0,606.0 C539.8,617.5 537.2,632.2 541.0,638.0 C544.8,643.8 552.3,644.8 558.0,641.0 C563.7,637.2 576.0,625.5 575.0,615.0 C574.0,604.5 560.7,589.5 552.0,578.0 C543.3,566.5 531.7,558.0 523.0,546.0 C514.3,534.0 508.8,511.7 500.0,506.0 C491.2,500.3 480.0,513.0 470.0,512.0 C460.0,511.0 447.8,504.0 440.0,500.0 C432.2,496.0 424.0,484.7 423.0,488.0Z" fill="#f6f6f2" stroke="#0d0d0d" stroke-width="3.0" stroke-linejoin="round" stroke-linecap="round"/><ellipse cx="470" cy="540" rx="16" ry="5" fill="#7e817c" transform="rotate(30 470 540)"/><ellipse cx="510" cy="565" rx="6" ry="10" fill="#b9bab4" transform="rotate(-30 510 565)"/><ellipse cx="540" cy="598" rx="6" ry="14" fill="#7e817c" transform="rotate(-25 540 598)"/><ellipse cx="560" cy="628" rx="8" ry="7" fill="#9e9ea6" transform="rotate(0 560 628)"/><ellipse cx="445" cy="525" rx="6" ry="4" fill="#7e817c" transform="rotate(0 445 525)"/><ellipse cx="528" cy="580" rx="4" ry="6" fill="#9e9ea6" transform="rotate(0 528 580)"/><ellipse cx="495" cy="545" rx="8" ry="4" fill="#b9bab4" transform="rotate(30 495 545)"/><path d="M495.0,545.0 l10,-5" stroke="#0d0d0d" stroke-width="1.3" stroke-linecap="round"/><path d="M500.5,551.2 l10,-5" stroke="#0d0d0d" stroke-width="1.3" stroke-linecap="round"/><path d="M506.0,557.3 l10,-5" stroke="#0d0d0d" stroke-width="1.3" stroke-linecap="round"/><path d="M511.5,563.5 l10,-5" stroke="#0d0d0d" stroke-width="1.3" stroke-linecap="round"/><path d="M517.0,569.7 l10,-5" stroke="#0d0d0d" stroke-width="1.3" stroke-linecap="round"/><path d="M522.5,575.8 l10,-5" stroke="#0d0d0d" stroke-width="1.3" stroke-linecap="round"/><path d="M528.0,582.0 l10,-5" stroke="#0d0d0d" stroke-width="1.3" stroke-linecap="round"/><path d="M530.0,596.0 l8,-4" stroke="#0d0d0d" stroke-width="1.2" stroke-linecap="round"/><path d="M535.0,601.3 l8,-4" stroke="#0d0d0d" stroke-width="1.2" stroke-linecap="round"/><path d="M540.0,606.7 l8,-4" stroke="#0d0d0d" stroke-width="1.2" stroke-linecap="round"/><path d="M545.0,612.0 l8,-4" stroke="#0d0d0d" stroke-width="1.2" stroke-linecap="round"/><path d="M548.0,622.0 C547.7,624.7 546.3,635.3 546.0,638.0" fill="none" stroke="#0d0d0d" stroke-width="1.3" stroke-linecap="round"/><path d="M556.0,620.0 C556.0,622.7 556.0,633.3 556.0,636.0" fill="none" stroke="#0d0d0d" stroke-width="1.3" stroke-linecap="round"/><path d="M564.0,618.0 C564.2,620.3 564.8,629.7 565.0,632.0" fill="none" stroke="#0d0d0d" stroke-width="1.3" stroke-linecap="round"/><path d="M366.0,457.0 C360.3,460.5 357.5,471.5 356.0,483.0 C354.5,494.5 354.8,513.2 357.0,526.0 C359.2,538.8 365.7,549.5 369.0,560.0 C372.3,570.5 378.0,581.3 377.0,589.0 C376.0,596.7 367.3,600.3 363.0,606.0 C358.7,611.7 353.2,617.7 351.0,623.0 C348.8,628.3 347.5,635.5 350.0,638.0 C352.5,640.5 361.0,637.2 366.0,638.0 C371.0,638.8 373.8,642.2 380.0,643.0 C386.2,643.8 393.8,643.3 403.0,643.0 C412.2,642.7 431.2,644.3 435.0,641.0 C438.8,637.7 429.0,629.8 426.0,623.0 C423.0,616.2 419.3,610.5 417.0,600.0 C414.7,589.5 412.8,574.7 412.0,560.0 C411.2,545.3 410.2,523.8 412.0,512.0 C413.8,500.2 423.3,496.0 423.0,489.0 C422.7,482.0 415.5,474.5 410.0,470.0 C404.5,465.5 397.3,464.2 390.0,462.0 C382.7,459.8 371.7,453.5 366.0,457.0Z" fill="#f6f6f2" stroke="#0d0d0d" stroke-width="3.0" stroke-linejoin="round" stroke-linecap="round"/><path d="M383.0,506.0 C386.3,496.0 400.2,498.5 405.0,500.0 C409.8,501.5 410.8,505.0 412.0,515.0 C413.2,525.0 412.3,547.7 412.0,560.0 C411.7,572.3 412.8,584.8 410.0,589.0 C407.2,593.2 399.2,589.8 395.0,585.0 C390.8,580.2 387.0,573.2 385.0,560.0 C383.0,546.8 379.7,516.0 383.0,506.0Z" fill="#7e817c"/><path d="M386.0,525.0 l12,-14" stroke="#0d0d0d" stroke-width="1.3" stroke-linecap="round"/><path d="M388.0,530.9 l12,-14" stroke="#0d0d0d" stroke-width="1.3" stroke-linecap="round"/><path d="M390.0,536.8 l12,-14" stroke="#0d0d0d" stroke-width="1.3" stroke-linecap="round"/><path d="M392.0,542.7 l12,-14" stroke="#0d0d0d" stroke-width="1.3" stroke-linecap="round"/><path d="M394.0,548.6 l12,-14" stroke="#0d0d0d" stroke-width="1.3" stroke-linecap="round"/><path d="M396.0,554.4 l12,-14" stroke="#0d0d0d" stroke-width="1.3" stroke-linecap="round"/><path d="M398.0,560.3 l12,-14" stroke="#0d0d0d" stroke-width="1.3" stroke-linecap="round"/><path d="M400.0,566.2 l12,-14" stroke="#0d0d0d" stroke-width="1.3" stroke-linecap="round"/><path d="M402.0,572.1 l12,-14" stroke="#0d0d0d" stroke-width="1.3" stroke-linecap="round"/><path d="M404.0,578.0 l12,-14" stroke="#0d0d0d" stroke-width="1.3" stroke-linecap="round"/><path d="M357.0,495.0 C357.5,484.7 363.5,485.8 366.0,490.0 C368.5,494.2 371.2,509.2 372.0,520.0 C372.8,530.8 372.5,549.7 371.0,555.0 C369.5,560.3 365.3,562.0 363.0,552.0 C360.7,542.0 356.5,505.3 357.0,495.0Z" fill="#c4c4c0"/><path d="M368.0,480.0 C369.3,475.0 376.0,474.3 380.0,476.0 C384.0,477.7 390.7,485.2 392.0,490.0 C393.3,494.8 391.3,502.3 388.0,505.0 C384.7,507.7 375.3,510.2 372.0,506.0 C368.7,501.8 366.7,485.0 368.0,480.0Z" fill="#7e817c"/><path d="M372.0,486.0 C371.0,488.8 367.0,500.2 366.0,503.0" fill="none" stroke="#0d0d0d" stroke-width="2.0" stroke-linecap="round"/><path d="M380.0,490.0 C378.7,493.0 373.3,505.0 372.0,508.0" fill="none" stroke="#0d0d0d" stroke-width="2.0" stroke-linecap="round"/><path d="M383.0,592.0 C386.3,589.5 398.8,589.0 405.0,590.0 C411.2,591.0 417.5,594.3 420.0,598.0 C422.5,601.7 423.3,609.7 420.0,612.0 C416.7,614.3 405.8,613.2 400.0,612.0 C394.2,610.8 387.8,608.3 385.0,605.0 C382.2,601.7 379.7,594.5 383.0,592.0Z" fill="#7e817c"/><path d="M386.0,595.0 l3,-8" stroke="#0d0d0d" stroke-width="1.2" stroke-linecap="round"/><path d="M390.0,595.5 l3,-8" stroke="#0d0d0d" stroke-width="1.2" stroke-linecap="round"/><path d="M394.0,596.0 l3,-8" stroke="#0d0d0d" stroke-width="1.2" stroke-linecap="round"/><path d="M398.0,596.5 l3,-8" stroke="#0d0d0d" stroke-width="1.2" stroke-linecap="round"/><path d="M402.0,597.0 l3,-8" stroke="#0d0d0d" stroke-width="1.2" stroke-linecap="round"/><path d="M406.0,597.5 l3,-8" stroke="#0d0d0d" stroke-width="1.2" stroke-linecap="round"/><path d="M410.0,598.0 l3,-8" stroke="#0d0d0d" stroke-width="1.2" stroke-linecap="round"/><path d="M383.0,612.0 C389.2,607.8 411.8,607.0 420.0,610.0 C428.2,613.0 430.3,625.0 432.0,630.0 C433.7,635.0 435.3,638.0 430.0,640.0 C424.7,642.0 407.8,642.8 400.0,642.0 C392.2,641.2 385.8,640.0 383.0,635.0 C380.2,630.0 376.8,616.2 383.0,612.0Z" fill="#9e9ea6"/><ellipse cx="362" cy="625" rx="6" ry="8" fill="#9e9ea6" transform="rotate(0 362 625)"/><path d="M397.0,499.0 C400.5,499.5 414.5,501.5 418.0,502.0" fill="none" stroke="#0d0d0d" stroke-width="2.0" stroke-linecap="round"/><path d="M377.0,589.0 C379.5,590.5 385.3,596.2 392.0,598.0 C398.7,599.8 412.8,599.7 417.0,600.0" fill="none" stroke="#0d0d0d" stroke-width="1.8" stroke-linecap="round"/><path d="M392.0,618.0 C392.7,620.3 393.8,628.3 396.0,632.0 C398.2,635.7 403.5,638.7 405.0,640.0" fill="none" stroke="#0d0d0d" stroke-width="1.4" stroke-linecap="round"/><path d="M410.0,620.0 C410.7,622.7 413.3,633.3 414.0,636.0" fill="none" stroke="#0d0d0d" stroke-width="1.4" stroke-linecap="round"/><path d="M365.0,615.0 C364.5,617.8 362.5,629.2 362.0,632.0" fill="none" stroke="#0d0d0d" stroke-width="1.4" stroke-linecap="round"/><path d="M398.0,319.0 C396.3,317.8 394.7,329.5 392.0,335.0 C389.3,340.5 385.3,345.8 382.0,352.0 C378.7,358.2 374.0,365.8 372.0,372.0 C370.0,378.2 369.0,384.0 370.0,389.0 C371.0,394.0 374.7,398.2 378.0,402.0 C381.3,405.8 385.8,410.3 390.0,412.0 C394.2,413.7 401.3,414.8 403.0,412.0 C404.7,409.2 401.8,400.3 400.0,395.0 C398.2,389.7 392.3,385.8 392.0,380.0 C391.7,374.2 396.3,366.3 398.0,360.0 C399.7,353.7 402.0,348.8 402.0,342.0 C402.0,335.2 399.7,320.2 398.0,319.0Z" fill="#a9a9b1" stroke="#0d0d0d" stroke-width="2.4" stroke-linejoin="round" stroke-linecap="round"/><path d="M376.0,386.0 C376.8,381.3 380.0,375.7 384.0,374.0 C388.0,372.3 395.7,373.7 400.0,376.0 C404.3,378.3 408.0,383.3 410.0,388.0 C412.0,392.7 413.0,399.8 412.0,404.0 C411.0,408.2 408.0,411.5 404.0,413.0 C400.0,414.5 392.2,414.8 388.0,413.0 C383.8,411.2 381.0,406.5 379.0,402.0 C377.0,397.5 375.2,390.7 376.0,386.0Z" fill="#f6f6f2" stroke="#0d0d0d" stroke-width="2.2" stroke-linejoin="round" stroke-linecap="round"/><ellipse cx="394" cy="396" rx="8" ry="5" fill="#7e817c" transform="rotate(0 394 396)"/><path d="M382.0,388.0 C384.7,387.8 395.3,387.2 398.0,387.0" fill="none" stroke="#0d0d0d" stroke-width="1.5" stroke-linecap="round"/><path d="M384.0,404.0 C386.7,404.0 397.3,404.0 400.0,404.0" fill="none" stroke="#0d0d0d" stroke-width="1.5" stroke-linecap="round"/><path d="M412.0,380.0 C416.2,373.0 430.3,379.3 440.0,378.0 C449.7,376.7 463.7,369.2 470.0,372.0 C476.3,374.8 478.0,386.2 478.0,395.0 C478.0,403.8 475.5,419.2 470.0,425.0 C464.5,430.8 454.2,430.8 445.0,430.0 C435.8,429.2 420.5,428.3 415.0,420.0 C409.5,411.7 407.8,387.0 412.0,380.0Z" fill="#a8a9a7"/><path d="M440.0,385.0 l-12,30" stroke="#0d0d0d" stroke-width="1.4" stroke-linecap="round"/><path d="M444.0,386.2 l-12,30" stroke="#0d0d0d" stroke-width="1.4" stroke-linecap="round"/><path d="M448.0,387.5 l-12,30" stroke="#0d0d0d" stroke-width="1.4" stroke-linecap="round"/><path d="M452.0,388.8 l-12,30" stroke="#0d0d0d" stroke-width="1.4" stroke-linecap="round"/><path d="M456.0,390.0 l-12,30" stroke="#0d0d0d" stroke-width="1.4" stroke-linecap="round"/><path d="M460.0,391.2 l-12,30" stroke="#0d0d0d" stroke-width="1.4" stroke-linecap="round"/><path d="M464.0,392.5 l-12,30" stroke="#0d0d0d" stroke-width="1.4" stroke-linecap="round"/><path d="M468.0,393.8 l-12,30" stroke="#0d0d0d" stroke-width="1.4" stroke-linecap="round"/><path d="M472.0,395.0 l-12,30" stroke="#0d0d0d" stroke-width="1.4" stroke-linecap="round"/><path d="M416.0,395.0 l-3,12" stroke="#0d0d0d" stroke-width="1.1" stroke-linecap="round"/><path d="M421.3,396.7 l-3,12" stroke="#0d0d0d" stroke-width="1.1" stroke-linecap="round"/><path d="M426.7,398.3 l-3,12" stroke="#0d0d0d" stroke-width="1.1" stroke-linecap="round"/><path d="M432.0,400.0 l-3,12" stroke="#0d0d0d" stroke-width="1.1" stroke-linecap="round"/><path d="M397.0,345.0 C398.3,340.8 405.3,341.7 408.0,345.0 C410.7,348.3 412.7,357.8 413.0,365.0 C413.3,372.2 411.5,382.2 410.0,388.0 C408.5,393.8 406.0,400.0 404.0,400.0 C402.0,400.0 398.7,393.0 398.0,388.0 C397.3,383.0 400.2,377.2 400.0,370.0 C399.8,362.8 395.7,349.2 397.0,345.0Z" fill="#6c6c84" stroke="#0d0d0d" stroke-width="2.0" stroke-linejoin="round" stroke-linecap="round"/><ellipse cx="404" cy="362" rx="4" ry="10" fill="#27284b" transform="rotate(0 404 362)"/><path d="M452.0,366.0 C454.3,363.5 461.5,361.8 464.0,365.0 C466.5,368.2 467.3,380.5 467.0,385.0 C466.7,389.5 464.5,390.8 462.0,392.0 C459.5,393.2 454.0,394.0 452.0,392.0 C450.0,390.0 450.0,384.3 450.0,380.0 C450.0,375.7 449.7,368.5 452.0,366.0Z" fill="#d8d8d8" stroke="#0d0d0d" stroke-width="1.8" stroke-linejoin="round" stroke-linecap="round"/><ellipse cx="458" cy="380" rx="3" ry="6" fill="#9e9ea6" transform="rotate(0 458 380)"/><path d="M416.0,352.0 C419.3,347.0 432.3,347.3 440.0,348.0 C447.7,348.7 458.2,351.3 462.0,356.0 C465.8,360.7 466.7,371.5 463.0,376.0 C459.3,380.5 447.2,382.7 440.0,383.0 C432.8,383.3 424.0,383.2 420.0,378.0 C416.0,372.8 412.7,357.0 416.0,352.0Z" fill="#f6f6f2"/><ellipse cx="437" cy="370" rx="15" ry="7" fill="#7e817c" transform="rotate(0 437 370)"/><path d="M418.0,359.0 C421.2,358.5 431.2,355.5 437.0,356.0 C442.8,356.5 450.3,361.0 453.0,362.0" fill="none" stroke="#0d0d0d" stroke-width="1.8" stroke-linecap="round"/><path d="M421.0,378.0 C424.2,378.8 434.3,383.0 440.0,383.0 C445.7,383.0 452.5,378.8 455.0,378.0" fill="none" stroke="#0d0d0d" stroke-width="1.6" stroke-linecap="round"/><path d="M445.0,440.0 C450.0,432.5 463.8,426.7 470.0,425.0 C476.2,423.3 480.7,425.8 482.0,430.0 C483.3,434.2 482.5,443.7 478.0,450.0 C473.5,456.3 461.3,464.7 455.0,468.0 C448.7,471.3 441.7,474.7 440.0,470.0 C438.3,465.3 440.0,447.5 445.0,440.0Z" fill="#27284b"/><path d="M450.0,432.0 l-8,26" stroke="#0d0d0d" stroke-width="1.3" stroke-linecap="round"/><path d="M454.7,433.3 l-8,26" stroke="#0d0d0d" stroke-width="1.3" stroke-linecap="round"/><path d="M459.3,434.7 l-8,26" stroke="#0d0d0d" stroke-width="1.3" stroke-linecap="round"/><path d="M464.0,436.0 l-8,26" stroke="#0d0d0d" stroke-width="1.3" stroke-linecap="round"/><path d="M468.7,437.3 l-8,26" stroke="#0d0d0d" stroke-width="1.3" stroke-linecap="round"/><path d="M473.3,438.7 l-8,26" stroke="#0d0d0d" stroke-width="1.3" stroke-linecap="round"/><path d="M478.0,440.0 l-8,26" stroke="#0d0d0d" stroke-width="1.3" stroke-linecap="round"/><path d="M386.0,412.0 C388.3,405.7 397.8,407.3 400.0,412.0 C402.2,416.7 399.5,433.3 399.0,440.0 C398.5,446.7 399.2,450.3 397.0,452.0 C394.8,453.7 387.8,456.7 386.0,450.0 C384.2,443.3 383.7,418.3 386.0,412.0Z" fill="#f6f6f2" stroke="#0d0d0d" stroke-width="1.8" stroke-linejoin="round" stroke-linecap="round"/><path d="M398.0,392.0 C401.3,384.7 414.7,385.0 420.0,388.0 C425.3,391.0 430.0,403.3 430.0,410.0 C430.0,416.7 425.0,424.3 420.0,428.0 C415.0,431.7 403.7,438.0 400.0,432.0 C396.3,426.0 394.7,399.3 398.0,392.0Z" fill="#8e8e9c"/><path d="M402.0,405.0 l6,12" stroke="#0d0d0d" stroke-width="1.3" stroke-linecap="round"/><path d="M406.0,406.2 l6,12" stroke="#0d0d0d" stroke-width="1.3" stroke-linecap="round"/><path d="M410.0,407.5 l6,12" stroke="#0d0d0d" stroke-width="1.3" stroke-linecap="round"/><path d="M414.0,408.8 l6,12" stroke="#0d0d0d" stroke-width="1.3" stroke-linecap="round"/><path d="M418.0,410.0 l6,12" stroke="#0d0d0d" stroke-width="1.3" stroke-linecap="round"/><path d="M378.0,446.0 C381.7,442.5 389.0,440.3 396.0,441.0 C403.0,441.7 412.7,446.8 420.0,450.0 C427.3,453.2 435.5,456.7 440.0,460.0 C444.5,463.3 447.7,466.5 447.0,470.0 C446.3,473.5 443.8,480.3 436.0,481.0 C428.2,481.7 410.3,477.2 400.0,474.0 C389.7,470.8 377.7,466.7 374.0,462.0 C370.3,457.3 374.3,449.5 378.0,446.0Z" fill="#f6f6f2" stroke="#0d0d0d" stroke-width="2.2" stroke-linejoin="round" stroke-linecap="round"/><path d="M372,454 C378,468 398,474 435,480" fill="none" stroke="#27284b" stroke-width="6" stroke-linecap="round"/><path d="M380.0,452.0 C384.2,453.3 395.0,456.7 405.0,460.0 C415.0,463.3 434.2,470.0 440.0,472.0" fill="none" stroke="#0d0d0d" stroke-width="1.8" stroke-linecap="round"/><path d="M375.0,463.0 C379.2,464.8 389.7,470.8 400.0,474.0 C410.3,477.2 430.8,480.7 437.0,482.0" fill="none" stroke="#0d0d0d" stroke-width="2.2" stroke-linecap="round"/><path d="M395.0,443.0 C396.7,436.8 414.5,425.2 422.0,425.0 C429.5,424.8 438.0,435.8 440.0,442.0 C442.0,448.2 438.7,458.7 434.0,462.0 C429.3,465.3 418.5,465.2 412.0,462.0 C405.5,458.8 393.3,449.2 395.0,443.0Z" fill="#9e9ea6" stroke="#0d0d0d" stroke-width="2.0" stroke-linejoin="round" stroke-linecap="round"/><path d="M405.0,440.0 l3,12" stroke="#0d0d0d" stroke-width="1.2" stroke-linecap="round"/><path d="M409.5,441.0 l3,12" stroke="#0d0d0d" stroke-width="1.2" stroke-linecap="round"/><path d="M414.0,442.0 l3,12" stroke="#0d0d0d" stroke-width="1.2" stroke-linecap="round"/><path d="M418.5,443.0 l3,12" stroke="#0d0d0d" stroke-width="1.2" stroke-linecap="round"/><path d="M423.0,444.0 l3,12" stroke="#0d0d0d" stroke-width="1.2" stroke-linecap="round"/><path d="M427.5,445.0 l3,12" stroke="#0d0d0d" stroke-width="1.2" stroke-linecap="round"/><path d="M432.0,446.0 l3,12" stroke="#0d0d0d" stroke-width="1.2" stroke-linecap="round"/><ellipse cx="418" cy="450" rx="7" ry="4" fill="#c8c8c8" transform="rotate(0 418 450)"/><path d="M397.0,317.0 C398.7,313.8 403.7,313.0 407.0,312.0 C410.3,311.0 411.5,310.3 417.0,311.0 C422.5,311.7 434.0,314.5 440.0,316.0 C446.0,317.5 449.8,316.7 453.0,320.0 C456.2,323.3 457.0,331.3 459.0,336.0 C461.0,340.7 466.2,345.3 465.0,348.0 C463.8,350.7 457.8,352.2 452.0,352.0 C446.2,351.8 438.3,348.8 430.0,347.0 C421.7,345.2 407.5,343.7 402.0,341.0 C396.5,338.3 397.8,335.0 397.0,331.0 C396.2,327.0 395.3,320.2 397.0,317.0Z" fill="#6c6c84" stroke="#0d0d0d" stroke-width="3.0" stroke-linejoin="round" stroke-linecap="round"/><path d="M403.0,318.0 C404.3,316.2 412.7,314.7 418.0,315.0 C423.3,315.3 433.0,317.8 435.0,320.0 C437.0,322.2 434.2,327.0 430.0,328.0 C425.8,329.0 414.5,327.7 410.0,326.0 C405.5,324.3 401.7,319.8 403.0,318.0Z" fill="#9e9ea6"/><path d="M412.0,330.0 C414.5,327.3 432.8,325.7 440.0,326.0 C447.2,326.3 451.3,328.7 455.0,332.0 C458.7,335.3 462.8,343.0 462.0,346.0 C461.2,349.0 456.2,350.7 450.0,350.0 C443.8,349.3 431.3,345.3 425.0,342.0 C418.7,338.7 409.5,332.7 412.0,330.0Z" fill="#27284b"/><path d="M404.0,328.0 C408.3,328.7 421.5,330.3 430.0,332.0 C438.5,333.7 450.8,337.0 455.0,338.0" fill="none" stroke="#0d0d0d" stroke-width="1.8" stroke-linecap="round"/><path d="M456.0,322.0 C458.5,319.8 465.2,320.5 470.0,321.0 C474.8,321.5 480.7,321.8 485.0,325.0 C489.3,328.2 493.7,334.5 496.0,340.0 C498.3,345.5 499.3,352.7 499.0,358.0 C498.7,363.3 497.2,369.7 494.0,372.0 C490.8,374.3 484.0,374.3 480.0,372.0 C476.0,369.7 473.0,362.3 470.0,358.0 C467.0,353.7 464.5,350.0 462.0,346.0 C459.5,342.0 456.0,338.0 455.0,334.0 C454.0,330.0 453.5,324.2 456.0,322.0Z" fill="#f6f6f2" stroke="#0d0d0d" stroke-width="2.2" stroke-linejoin="round" stroke-linecap="round"/><path d="M457.0,323.0 C459.7,321.2 472.2,321.3 478.0,323.0 C483.8,324.7 491.7,330.7 492.0,333.0 C492.3,335.3 485.0,336.8 480.0,337.0 C475.0,337.2 465.8,336.3 462.0,334.0 C458.2,331.7 454.3,324.8 457.0,323.0Z" fill="#2c2c40"/><ellipse cx="486" cy="355" rx="6" ry="9" fill="#7e817c" transform="rotate(0 486 355)"/><path d="M466.0,342.0 C469.3,343.0 482.7,347.0 486.0,348.0" fill="none" stroke="#0d0d0d" stroke-width="1.5" stroke-linecap="round"/><path d="M423.0,302.0 C425.7,299.5 433.2,296.3 438.0,297.0 C442.8,297.7 449.7,302.8 452.0,306.0 C454.3,309.2 455.7,314.0 452.0,316.0 C448.3,318.0 435.0,318.7 430.0,318.0 C425.0,317.3 423.2,314.7 422.0,312.0 C420.8,309.3 420.3,304.5 423.0,302.0Z" fill="#dcdcdc"/><path d="M426.0,304.0 l-3,13" stroke="#0d0d0d" stroke-width="1.3" stroke-linecap="round"/><path d="M429.1,303.7 l-3,13" stroke="#0d0d0d" stroke-width="1.3" stroke-linecap="round"/><path d="M432.3,303.4 l-3,13" stroke="#0d0d0d" stroke-width="1.3" stroke-linecap="round"/><path d="M435.4,303.1 l-3,13" stroke="#0d0d0d" stroke-width="1.3" stroke-linecap="round"/><path d="M438.6,302.9 l-3,13" stroke="#0d0d0d" stroke-width="1.3" stroke-linecap="round"/><path d="M441.7,302.6 l-3,13" stroke="#0d0d0d" stroke-width="1.3" stroke-linecap="round"/><path d="M444.9,302.3 l-3,13" stroke="#0d0d0d" stroke-width="1.3" stroke-linecap="round"/><path d="M448.0,302.0 l-3,13" stroke="#0d0d0d" stroke-width="1.3" stroke-linecap="round"/><ellipse cx="440" cy="301" rx="9" ry="4" fill="#27284b" transform="rotate(-10 440 301)"/><path d="M423.0,302.0 C425.8,301.0 434.7,296.3 440.0,296.0 C445.3,295.7 452.5,299.3 455.0,300.0" fill="none" stroke="#0d0d0d" stroke-width="2.2" stroke-linecap="round"/><path d="M393.0,216.0 L392.6,211.2 L397.0,205.0 L394.1,200.8 L395.0,196.0 L394.6,193.3 L401.0,190.0 L400.8,185.0 L404.0,180.0 L402.4,175.6 L407.0,172.0 L409.0,170.0 L416.0,169.0 L419.4,169.1 L426.0,170.0 L426.2,164.0 L432.0,160.0 L434.6,157.2 L440.0,156.0 L439.8,150.8 L444.0,149.0 L446.8,146.8 L452.0,147.0 L455.9,146.1 L462.0,148.0 L466.3,146.0 L473.0,149.0 L474.5,147.2 L478.0,153.0 L481.8,149.6 L486.0,150.0 L491.4,148.4 L496.0,151.0 L502.4,145.9 L506.0,147.0 L510.4,146.4 L510.0,153.0 L515.2,153.2 L516.0,158.0 L521.2,158.4 L522.0,162.0 L530.4,160.9 L531.0,164.0 L535.5,163.9 L537.0,165.0 L542.4,167.3 L540.0,172.0 L542.8,175.6 L541.0,180.0 L544.9,185.0 L545.0,190.0 L545.8,194.3 L543.0,198.0 L546.3,202.7 L545.0,206.0 L546.6,211.6 L541.0,214.0 L542.3,219.5 L540.0,223.0 L541.0,229.5 L537.0,232.0 L537.4,238.4 L533.0,240.0 L532.1,246.1 L528.0,248.0 L525.6,253.7 L520.0,254.0 L516.2,257.5 L511.0,258.0 L508.6,250.6 L505.0,240.0 L447.6,229.6 L478.0,217.0 L450.0,214.0 L422.0,214.0 L425.0,240.0 L412.0,240.0 L402.0,232.0 L396.0,224.0Z" fill="#9e9ea6" stroke="#0d0d0d" stroke-width="2.2" stroke-linejoin="round"/><path d="M430.0,162.0 C433.0,158.0 439.3,155.5 446.0,156.0 C452.7,156.5 463.2,165.0 470.0,165.0 C476.8,165.0 480.0,156.8 487.0,156.0 C494.0,155.2 507.3,155.2 512.0,160.0 C516.7,164.8 517.0,180.0 515.0,185.0 C513.0,190.0 505.8,188.3 500.0,190.0 C494.2,191.7 486.7,195.0 480.0,195.0 C473.3,195.0 467.0,190.8 460.0,190.0 C453.0,189.2 443.3,191.7 438.0,190.0 C432.7,188.3 429.3,184.7 428.0,180.0 C426.7,175.3 427.0,166.0 430.0,162.0Z" fill="#efeee3"/><path d="M394.0,200.0 C395.5,195.2 400.7,196.2 405.0,197.0 C409.3,197.8 416.8,200.3 420.0,205.0 C423.2,209.7 423.7,218.8 424.0,225.0 C424.3,231.2 424.7,239.5 422.0,242.0 C419.3,244.5 412.3,242.7 408.0,240.0 C403.7,237.3 398.3,232.7 396.0,226.0 C393.7,219.3 392.5,204.8 394.0,200.0Z" fill="#2b2b3e"/><path d="M437.0,188.0 C440.3,184.5 452.8,185.3 460.0,186.0 C467.2,186.7 473.8,191.3 480.0,192.0 C486.2,192.7 493.7,187.8 497.0,190.0 C500.3,192.2 502.0,201.3 500.0,205.0 C498.0,208.7 491.3,210.7 485.0,212.0 C478.7,213.3 469.5,213.8 462.0,213.0 C454.5,212.2 444.2,211.2 440.0,207.0 C435.8,202.8 433.7,191.5 437.0,188.0Z" fill="#2d2e46"/><path d="M497.0,149.0 C499.5,147.2 507.8,149.2 512.0,151.0 C516.2,152.8 520.7,156.0 522.0,160.0 C523.3,164.0 522.8,173.0 520.0,175.0 C517.2,177.0 508.8,174.2 505.0,172.0 C501.2,169.8 498.3,165.8 497.0,162.0 C495.7,158.2 494.5,150.8 497.0,149.0Z" fill="#2f3045"/><path d="M518.0,174.0 C520.2,171.3 527.3,169.3 530.0,172.0 C532.7,174.7 533.8,184.3 534.0,190.0 C534.2,195.7 533.2,203.7 531.0,206.0 C528.8,208.3 523.3,207.0 521.0,204.0 C518.7,201.0 517.5,193.0 517.0,188.0 C516.5,183.0 515.8,176.7 518.0,174.0Z" fill="#27284b"/><path d="M507.0,218.0 C510.2,214.5 520.2,212.3 525.0,214.0 C529.8,215.7 534.8,222.8 536.0,228.0 C537.2,233.2 535.5,241.3 532.0,245.0 C528.5,248.7 519.3,251.7 515.0,250.0 C510.7,248.3 507.3,240.3 506.0,235.0 C504.7,229.7 503.8,221.5 507.0,218.0Z" fill="#27284b"/><ellipse cx="463" cy="157" rx="9" ry="5" fill="#9e9ea6" transform="rotate(0 463 157)"/><ellipse cx="416" cy="186" rx="8" ry="12" fill="#9e9ea6" transform="rotate(0 416 186)"/><ellipse cx="525" cy="235" rx="5" ry="6" fill="#9e9ea6" transform="rotate(0 525 235)"/><ellipse cx="472" cy="201" rx="5" ry="4" fill="#9e9ea6" transform="rotate(0 472 201)"/><ellipse cx="460" cy="220" rx="14" ry="4" fill="#efeee3" transform="rotate(0 460 220)"/><ellipse cx="527" cy="222" rx="5" ry="5" fill="#b9bab4" transform="rotate(0 527 222)"/><ellipse cx="450" cy="173" rx="6" ry="5" fill="#b9bab4" transform="rotate(0 450 173)"/><ellipse cx="485" cy="180" rx="5" ry="4" fill="#b9bab4" transform="rotate(0 485 180)"/><path d="M445.0,150.0 C447.2,149.3 453.5,146.2 458.0,146.0 C462.5,145.8 469.7,148.5 472.0,149.0" fill="none" stroke="#0d0d0d" stroke-width="2.0" stroke-linecap="round"/><path d="M432.0,159.0 C434.0,159.5 440.3,161.2 444.0,162.0 C447.7,162.8 452.3,163.7 454.0,164.0" fill="none" stroke="#0d0d0d" stroke-width="2.0" stroke-linecap="round"/><path d="M472.0,153.0 C474.2,154.2 482.3,160.7 485.0,160.0 C487.7,159.3 487.5,150.8 488.0,149.0" fill="none" stroke="#0d0d0d" stroke-width="2.0" stroke-linecap="round"/><path d="M479.0,151.0 C481.7,150.3 490.3,147.5 495.0,147.0 C499.7,146.5 505.0,147.8 507.0,148.0" fill="none" stroke="#0d0d0d" stroke-width="2.0" stroke-linecap="round"/><path d="M407.0,170.0 C408.8,169.7 414.8,167.8 418.0,168.0 C421.2,168.2 424.7,170.5 426.0,171.0" fill="none" stroke="#0d0d0d" stroke-width="2.0" stroke-linecap="round"/><path d="M408.0,179.0 C407.2,180.8 403.8,188.2 403.0,190.0" fill="none" stroke="#0d0d0d" stroke-width="2.0" stroke-linecap="round"/><path d="M393.0,217.0 C395.0,218.8 401.2,224.2 405.0,228.0 C408.8,231.8 414.2,238.0 416.0,240.0" fill="none" stroke="#0d0d0d" stroke-width="2.0" stroke-linecap="round"/><path d="M436.0,187.0 C439.2,187.5 447.8,188.5 455.0,190.0 C462.2,191.5 475.0,195.0 479.0,196.0" fill="none" stroke="#0d0d0d" stroke-width="2.0" stroke-linecap="round"/><path d="M440.0,206.0 C443.8,207.2 455.2,212.8 463.0,213.0 C470.8,213.2 483.0,208.0 487.0,207.0" fill="none" stroke="#0d0d0d" stroke-width="2.0" stroke-linecap="round"/><path d="M516.0,167.0 C519.2,166.3 530.8,160.2 535.0,163.0 C539.2,165.8 540.2,178.5 541.0,184.0 C541.8,189.5 540.0,190.8 540.0,196.0 C540.0,201.2 540.8,211.8 541.0,215.0" fill="none" stroke="#0d0d0d" stroke-width="2.0" stroke-linecap="round"/><path d="M519.0,187.0 C520.7,189.7 527.3,200.3 529.0,203.0" fill="none" stroke="#0d0d0d" stroke-width="2.0" stroke-linecap="round"/><path d="M504.0,221.0 C507.0,223.2 521.5,229.3 522.0,234.0 C522.5,238.7 509.5,246.5 507.0,249.0" fill="none" stroke="#0d0d0d" stroke-width="2.0" stroke-linecap="round"/><path d="M445.0,172.0 C446.2,173.3 451.5,177.0 452.0,180.0 C452.5,183.0 448.7,188.3 448.0,190.0" fill="none" stroke="#0d0d0d" stroke-width="2.0" stroke-linecap="round"/><path d="M462.0,175.0 C463.3,176.2 469.3,179.2 470.0,182.0 C470.7,184.8 466.7,190.3 466.0,192.0" fill="none" stroke="#0d0d0d" stroke-width="2.0" stroke-linecap="round"/><path d="M490.0,168.0 C491.7,169.3 498.8,173.0 500.0,176.0 C501.2,179.0 497.5,184.3 497.0,186.0" fill="none" stroke="#0d0d0d" stroke-width="2.0" stroke-linecap="round"/><path d="M412.0,200.0 C410.8,201.7 406.2,208.3 405.0,210.0" fill="none" stroke="#0d0d0d" stroke-width="2.0" stroke-linecap="round"/><path d="M430.0,190.0 C429.7,191.7 427.0,197.5 428.0,200.0 C429.0,202.5 434.7,204.2 436.0,205.0" fill="none" stroke="#0d0d0d" stroke-width="2.0" stroke-linecap="round"/><path d="M495.0,195.0 C496.7,196.3 502.2,202.2 505.0,203.0 C507.8,203.8 510.8,200.5 512.0,200.0" fill="none" stroke="#0d0d0d" stroke-width="2.0" stroke-linecap="round"/><path d="M414.4,177.9 C414.7,177.5 415.6,176.1 416.4,175.5 C417.2,174.9 418.4,174.6 419.3,174.5 C420.3,174.5 421.4,174.7 422.2,175.2 C423.0,175.6 423.7,176.4 424.2,177.2 C424.6,177.9 424.8,178.9 424.8,179.8 C424.8,180.6 424.4,181.5 424.0,182.2 C423.6,182.8 422.5,183.5 422.2,183.7" fill="none" stroke="#0d0d0d" stroke-width="1.9" stroke-linecap="round"/><path d="M435.0,170.0 C435.2,169.6 435.4,168.2 435.9,167.5 C436.4,166.8 437.2,166.2 437.9,165.9 C438.6,165.6 439.6,165.5 440.3,165.6 C441.1,165.7 441.9,166.1 442.5,166.6 C443.0,167.1 443.5,167.8 443.7,168.4 C443.9,169.1 443.9,169.9 443.8,170.6 C443.6,171.2 442.9,172.0 442.8,172.3" fill="none" stroke="#0d0d0d" stroke-width="1.9" stroke-linecap="round"/><path d="M464.4,164.1 C464.4,163.5 464.1,161.8 464.4,160.9 C464.6,159.9 465.3,158.9 466.0,158.2 C466.7,157.6 467.7,157.1 468.6,156.9 C469.5,156.7 470.5,156.8 471.4,157.1 C472.2,157.5 473.0,158.1 473.5,158.7 C474.0,159.4 474.4,160.3 474.5,161.1 C474.6,161.9 474.1,163.1 474.1,163.5" fill="none" stroke="#0d0d0d" stroke-width="1.9" stroke-linecap="round"/><path d="M495.3,158.3 C495.6,157.9 496.4,156.7 497.1,156.2 C497.8,155.7 498.8,155.4 499.7,155.4 C500.5,155.4 501.4,155.7 502.1,156.1 C502.8,156.6 503.4,157.3 503.7,158.0 C504.0,158.7 504.1,159.6 504.0,160.3 C503.9,161.0 503.5,161.8 503.0,162.3 C502.6,162.8 501.5,163.2 501.2,163.4" fill="none" stroke="#0d0d0d" stroke-width="1.9" stroke-linecap="round"/><path d="M525.9,172.4 C526.5,172.4 528.2,172.1 529.1,172.4 C530.1,172.6 531.1,173.3 531.8,174.0 C532.4,174.7 532.9,175.7 533.1,176.6 C533.3,177.5 533.2,178.5 532.9,179.4 C532.5,180.2 531.9,181.0 531.3,181.5 C530.6,182.0 529.7,182.4 528.9,182.5 C528.1,182.6 526.9,182.1 526.5,182.1" fill="none" stroke="#0d0d0d" stroke-width="1.9" stroke-linecap="round"/><path d="M531.0,199.8 C531.5,199.7 533.1,199.1 534.1,199.2 C535.1,199.3 536.2,199.8 537.0,200.4 C537.8,200.9 538.4,201.9 538.8,202.7 C539.1,203.6 539.2,204.6 539.0,205.5 C538.9,206.4 538.4,207.3 537.8,207.9 C537.3,208.5 536.4,209.0 535.7,209.2 C534.9,209.5 533.7,209.3 533.2,209.3" fill="none" stroke="#0d0d0d" stroke-width="1.9" stroke-linecap="round"/><path d="M407.0,210.2 C406.7,209.8 405.4,208.7 405.0,207.9 C404.6,207.0 404.4,205.9 404.5,205.0 C404.5,204.1 404.9,203.1 405.4,202.4 C405.9,201.6 406.7,201.0 407.5,200.6 C408.2,200.3 409.2,200.1 410.0,200.2 C410.8,200.3 411.7,200.6 412.3,201.1 C412.9,201.5 413.5,202.5 413.7,202.8" fill="none" stroke="#0d0d0d" stroke-width="1.9" stroke-linecap="round"/><path d="M458.0,200.0 C457.8,200.5 457.5,202.2 456.9,203.0 C456.3,203.8 455.4,204.5 454.5,204.9 C453.6,205.3 452.5,205.4 451.6,205.3 C450.7,205.1 449.7,204.7 449.1,204.1 C448.4,203.5 447.8,202.7 447.6,201.9 C447.3,201.1 447.3,200.1 447.5,199.3 C447.7,198.5 448.5,197.6 448.7,197.2" fill="none" stroke="#0d0d0d" stroke-width="1.9" stroke-linecap="round"/><path d="M493.6,200.1 C493.3,200.5 492.4,201.9 491.6,202.5 C490.8,203.1 489.6,203.4 488.7,203.5 C487.7,203.5 486.6,203.3 485.8,202.8 C485.0,202.4 484.3,201.6 483.8,200.8 C483.4,200.1 483.2,199.1 483.2,198.2 C483.2,197.4 483.6,196.5 484.0,195.8 C484.4,195.2 485.5,194.5 485.8,194.3" fill="none" stroke="#0d0d0d" stroke-width="1.9" stroke-linecap="round"/><path d="M514.1,225.1 C514.6,225.1 515.9,225.2 516.6,225.5 C517.4,225.8 518.1,226.4 518.5,227.0 C519.0,227.7 519.3,228.5 519.3,229.2 C519.4,230.0 519.2,230.8 518.9,231.4 C518.7,232.1 518.1,232.7 517.6,233.1 C517.0,233.4 516.3,233.7 515.7,233.7 C515.0,233.8 514.1,233.4 513.8,233.4" fill="none" stroke="#0d0d0d" stroke-width="1.9" stroke-linecap="round"/><path d="M405.0,233.0 C404.6,232.9 403.3,232.6 402.6,232.2 C401.9,231.7 401.3,231.0 401.0,230.3 C400.7,229.6 400.5,228.7 400.6,228.0 C400.7,227.3 401.0,226.5 401.4,225.9 C401.8,225.3 402.4,224.8 403.0,224.5 C403.6,224.3 404.4,224.1 405.0,224.2 C405.6,224.3 406.5,224.8 406.8,224.9" fill="none" stroke="#0d0d0d" stroke-width="1.9" stroke-linecap="round"/><path d="M455.3,178.3 C455.6,177.9 456.3,176.7 457.0,176.2 C457.7,175.8 458.6,175.5 459.4,175.4 C460.2,175.4 461.1,175.6 461.8,176.0 C462.5,176.4 463.1,177.0 463.5,177.6 C463.8,178.3 464.0,179.1 464.0,179.8 C464.0,180.5 463.7,181.3 463.3,181.8 C463.0,182.4 462.1,182.9 461.8,183.1" fill="none" stroke="#0d0d0d" stroke-width="1.9" stroke-linecap="round"/><path d="M421.0,214.0 C418.3,218.8 422.8,233.0 424.0,242.0 C425.2,251.0 425.8,260.7 428.0,268.0 C430.2,275.3 433.5,281.3 437.0,286.0 C440.5,290.7 445.2,293.3 449.0,296.0 C452.8,298.7 455.7,301.2 460.0,302.0 C464.3,302.8 470.0,302.5 475.0,301.0 C480.0,299.5 485.5,296.0 490.0,293.0 C494.5,290.0 499.2,287.7 502.0,283.0 C504.8,278.3 506.5,271.0 507.0,265.0 C507.5,259.0 505.7,253.2 505.0,247.0 C504.3,240.8 506.3,233.2 503.0,228.0 C499.7,222.8 492.2,218.3 485.0,216.0 C477.8,213.7 467.5,214.5 460.0,214.0 C452.5,213.5 446.5,213.0 440.0,213.0 C433.5,213.0 423.7,209.2 421.0,214.0Z" fill="#efeee3"/><path d="M421.0,214.0 C421.5,218.7 422.8,233.0 424.0,242.0 C425.2,251.0 425.8,260.7 428.0,268.0 C430.2,275.3 433.5,281.3 437.0,286.0 C440.5,290.7 445.2,293.3 449.0,296.0 C452.8,298.7 455.7,301.2 460.0,302.0 C464.3,302.8 470.0,302.5 475.0,301.0 C480.0,299.5 485.5,296.0 490.0,293.0 C494.5,290.0 500.0,284.7 502.0,283.0" fill="none" stroke="#0d0d0d" stroke-width="2.4" stroke-linecap="round"/><path d="M505.0,247.0 C505.3,250.0 507.5,259.0 507.0,265.0 C506.5,271.0 502.8,280.0 502.0,283.0" fill="none" stroke="#0d0d0d" stroke-width="1.6" stroke-linecap="round"/><ellipse cx="429" cy="262" rx="5" ry="16" fill="#b9bab4" transform="rotate(5 429 262)"/><ellipse cx="456" cy="266" rx="11" ry="8" fill="#9e9ea6" transform="rotate(0 456 266)"/><ellipse cx="438" cy="248" rx="10" ry="5" fill="#27284b" transform="rotate(5 438 248)"/><ellipse cx="476" cy="245" rx="16" ry="5" fill="#27284b" transform="rotate(0 476 245)"/><ellipse cx="499" cy="260" rx="4" ry="12" fill="#b9bab4" transform="rotate(0 499 260)"/><ellipse cx="452" cy="236" rx="12" ry="4" fill="#9e9ea6" transform="rotate(0 452 236)"/><ellipse cx="488" cy="292" rx="8" ry="5" fill="#b9bab4" transform="rotate(0 488 292)"/><ellipse cx="472" cy="299" rx="16" ry="4" fill="#7e817c" transform="rotate(-8 472 299)"/><ellipse cx="500" cy="238" rx="5" ry="10" fill="#9e9ea6" transform="rotate(0 500 238)"/><path d="M424.0,219.0 l8,16" stroke="#0d0d0d" stroke-width="1.3" stroke-linecap="round"/><path d="M426.5,220.5 l8,16" stroke="#0d0d0d" stroke-width="1.3" stroke-linecap="round"/><path d="M429.0,222.0 l8,16" stroke="#0d0d0d" stroke-width="1.3" stroke-linecap="round"/><path d="M431.5,223.5 l8,16" stroke="#0d0d0d" stroke-width="1.3" stroke-linecap="round"/><path d="M434.0,225.0 l8,16" stroke="#0d0d0d" stroke-width="1.3" stroke-linecap="round"/><path d="M479.0,217.0 l7,10" stroke="#0d0d0d" stroke-width="1.3" stroke-linecap="round"/><path d="M483.5,218.2 l7,10" stroke="#0d0d0d" stroke-width="1.3" stroke-linecap="round"/><path d="M488.0,219.5 l7,10" stroke="#0d0d0d" stroke-width="1.3" stroke-linecap="round"/><path d="M492.5,220.8 l7,10" stroke="#0d0d0d" stroke-width="1.3" stroke-linecap="round"/><path d="M497.0,222.0 l7,10" stroke="#0d0d0d" stroke-width="1.3" stroke-linecap="round"/><path d="M449.0,283.0 C450.2,281.2 454.5,279.2 458.0,279.0 C461.5,278.8 467.3,280.5 470.0,282.0 C472.7,283.5 475.3,286.3 474.0,288.0 C472.7,289.7 465.8,291.7 462.0,292.0 C458.2,292.3 453.2,291.5 451.0,290.0 C448.8,288.5 447.8,284.8 449.0,283.0Z" fill="#dcdcd2" stroke="#0d0d0d" stroke-width="1.8" stroke-linejoin="round" stroke-linecap="round"/><path d="M451.0,285.0 C452.8,285.2 458.5,286.0 462.0,286.0 C465.5,286.0 470.3,285.2 472.0,285.0" fill="none" stroke="#0d0d0d" stroke-width="1.4" stroke-linecap="round"/><path d="M430.0,246.0 C431.7,245.5 436.8,242.3 440.0,243.0 C443.2,243.7 447.5,248.8 449.0,250.0" fill="none" stroke="#0d0d0d" stroke-width="1.8" stroke-linecap="round"/><path d="M458.0,243.0 C460.8,242.3 469.2,238.7 475.0,239.0 C480.8,239.3 490.0,244.0 493.0,245.0" fill="none" stroke="#0d0d0d" stroke-width="1.8" stroke-linecap="round"/><path d="M447.0,268.0 C448.5,268.8 452.8,272.5 456.0,273.0 C459.2,273.5 464.3,271.3 466.0,271.0" fill="none" stroke="#0d0d0d" stroke-width="1.8" stroke-linecap="round"/><path d="M436.0,251.0 C437.3,251.5 442.7,253.5 444.0,254.0" fill="none" stroke="#0d0d0d" stroke-width="1.8" stroke-linecap="round"/><path d="M466.0,250.0 C468.7,250.0 479.3,250.0 482.0,250.0" fill="none" stroke="#0d0d0d" stroke-width="1.8" stroke-linecap="round"/><path d="M476.0,287.0 C478.3,287.7 486.2,291.3 490.0,291.0 C493.8,290.7 497.5,286.0 499.0,285.0" fill="none" stroke="#0d0d0d" stroke-width="1.8" stroke-linecap="round"/><path d="M452.0,298.0 C455.8,298.5 467.5,302.3 475.0,301.0 C482.5,299.7 493.3,291.8 497.0,290.0" fill="none" stroke="#0d0d0d" stroke-width="1.8" stroke-linecap="round"/><path d="M443.0,279.0 C443.8,280.3 447.2,285.7 448.0,287.0" fill="none" stroke="#0d0d0d" stroke-width="1.8" stroke-linecap="round"/><path d="M509.0,257.0 C509.3,252.3 512.3,250.2 516.0,250.0 C519.7,249.8 527.5,250.5 531.0,256.0 C534.5,261.5 534.7,277.5 537.0,283.0 C539.3,288.5 546.2,288.0 545.0,289.0 C543.8,290.0 535.2,290.8 530.0,289.0 C524.8,287.2 517.5,283.3 514.0,278.0 C510.5,272.7 508.7,261.7 509.0,257.0Z" fill="#f6f6f2"/><path d="M509.0,255.0 C509.3,257.2 510.0,264.0 511.0,268.0 C512.0,272.0 512.0,275.7 515.0,279.0 C518.0,282.3 523.8,286.3 529.0,288.0 C534.2,289.7 543.2,288.8 546.0,289.0" fill="none" stroke="#0d0d0d" stroke-width="2.2" stroke-linecap="round"/></svg>
<!-- status bar -->
<div class="a" style="left:74px;top:711px;width:721px;height:17px;background:#484848;border-top:1px solid #2c2c2c"></div>
<div class="t cb" style="left:322px;top:716px;color:#dadada">Выделенный фрагмент</div>
<div class="a" style="left:478px;top:712px;width:18px;height:16px;background:#5a5a5a;border-left:1px solid #3a3a3a"></div>
<svg style="left:484px;top:716px" width="6" height="9"><path d="M0 0L6 4.5L0 9Z" fill="#cfcfcf"/></svg>
<div class="a" style="left:496px;top:712px;width:299px;height:16px;background:#393939"></div>
<svg style="left:501px;top:716px" width="6" height="9"><path d="M6 0L0 4.5L6 9Z" fill="#d8d8d8"/></svg>
<div class="a" style="left:749px;top:712px;width:15px;height:15px;background:#9c9c9c"></div>
<!-- ============ INFO PANEL ============ -->
<div class="a" style="left:74px;top:623px;width:231px;height:105px;background:#2e2e2e;border-radius:0 4px 0 0"></div>
<div class="a" style="left:74px;top:624px;width:230px;height:13px;background:#383838;border-radius:0 3px 0 0"></div>
<svg style="left:276px;top:627px" width="8" height="7"><path d="M4 0L0 3.5L4 7Z M8 0L4 3.5L8 7Z" fill="#c8c8c8"/></svg>
<svg style="left:292px;top:627px" width="7" height="7"><path d="M0.5 0.5L6.5 6.5M6.5 0.5L0.5 6.5" stroke="#c8c8c8" stroke-width="1.6"/></svg>
<div class="a" style="left:74px;top:637px;width:230px;height:17px;background:#3a3a3a"></div>
<div class="tab" style="left:81px;top:641px">Навигатор</div>
<div class="a" style="left:141px;top:637px;width:86px;height:17px;background:#4a4a4a"></div>
<svg style="left:145px;top:640px" width="6" height="11"><path d="M0.5 4 L3 1 L5.5 4 M0.5 7 L3 10 L5.5 7" fill="none" stroke="#ccc" stroke-width="1.1"/></svg>
<div class="tab act" style="left:154px;top:641px">Информация</div>
<svg style="left:287px;top:641px" width="14" height="10"><path d="M0 2 L5 2 L2.5 5Z" fill="#ccc"/><rect x="6" y="0" width="8" height="1.4" fill="#ccc"/><rect x="6" y="3" width="8" height="1.4" fill="#ccc"/><rect x="6" y="6" width="8" height="1.4" fill="#ccc"/><rect x="6" y="9" width="8" height="1.4" fill="#ccc"/></svg>
<div class="a" style="left:74px;top:654px;width:230px;height:74px;background:#4a4a4a"></div>
<svg style="left:80px;top:669px" width="13" height="13"><path d="M6.5 0V13M0 6.5H13" stroke="#c8c8c8" stroke-width="1"/></svg>
<div class="t cb" style="left:100px;top:662px;color:#d0d0d0">X:</div>
<div class="t cb" style="left:118px;top:662px;color:#e0e0e0">467 пикс.</div>
<div class="t cb" style="left:100px;top:680px;color:#d0d0d0">Y:</div>
<div class="t cb" style="left:118px;top:680px;color:#e0e0e0">475 пикс.</div>
<div class="a" style="left:191px;top:660px;width:1px;height:34px;background:#3a3a3a"></div>
<svg style="left:193px;top:670px" width="16" height="16"><path d="M2 13 V4 H13" fill="none" stroke="#ccc" stroke-width="1.2"/><path d="M11 2 L14 4 L11 6Z M0 12 L2 15 L4 12Z" fill="#ccc"/><path d="M5 14 H14 V7" fill="none" stroke="#ccc" stroke-dasharray="1 1"/></svg>
<div class="t cb" style="left:215px;top:662px;color:#d0d0d0">Ш:</div>
<div class="t cb" style="left:236px;top:662px;color:#e0e0e0">0 пикс.</div>
<div class="t cb" style="left:218px;top:683px;color:#d0d0d0">В:</div>
<div class="t cb" style="left:236px;top:683px;color:#e0e0e0">0 пикс.</div>
<div class="a" style="left:79px;top:699px;width:220px;height:1px;background:#3a3a3a"></div>
<div class="a" style="left:191px;top:706px;width:1px;height:16px;background:#3a3a3a"></div>

<!-- ============ RIGHT DOCK ============ -->
<div class="a" style="left:795px;top:66px;width:571px;height:662px;background:#2a2a2a"></div>
<!-- collapse header strips -->
<div class="a" style="left:796px;top:66px;width:230px;height:9px;background:#3a3a3a"></div>
<div class="a" style="left:1028px;top:66px;width:338px;height:11px;background:#3a3a3a"></div>
<svg style="left:1054px;top:68px" width="8" height="7"><path d="M4 0L0 3.5L4 7Z M8 0L4 3.5L8 7Z" fill="#c8c8c8"/></svg>
<svg style="left:1353px;top:68px" width="8" height="7"><path d="M0 0L4 3.5L0 7Z M4 0L8 3.5L4 7Z" fill="#c8c8c8"/></svg>

<!-- BRUSHES PANEL -->
<div class="a" style="left:796px;top:78px;width:230px;height:17px;background:#3a3a3a"></div>
<div class="a" style="left:796px;top:78px;width:44px;height:17px;background:#4a4a4a"></div>
<div class="tab act" style="left:803px;top:83px">Кисти</div>
<div class="a" style="left:840px;top:78px;width:1px;height:17px;background:#2e2e2e"></div>
<div class="tab" style="left:847px;top:83px">Образцы</div>
<div class="a" style="left:899px;top:78px;width:1px;height:17px;background:#2e2e2e"></div>
<div class="tab" style="left:907px;top:83px">Символы</div>
<div class="a" style="left:960px;top:78px;width:1px;height:17px;background:#2e2e2e"></div>
<svg style="left:985px;top:83px" width="12" height="8"><path d="M0 0L5 4L0 8Z M6 0L11 4L6 8Z" fill="#c0c0c0"/></svg>
<div class="a" style="left:1001px;top:81px;width:1px;height:12px;background:#6a6a6a"></div>
<div class="a" style="left:1003px;top:81px;width:1px;height:12px;background:#2a2a2a"></div>
<svg class="mi" style="left:1008px;top:83px" width="14" height="10"><path d="M0 2 L5 2 L2.5 5Z" fill="#ccc"/><rect x="6" y="0" width="8" height="1.4" fill="#ccc"/><rect x="6" y="3" width="8" height="1.4" fill="#ccc"/><rect x="6" y="6" width="8" height="1.4" fill="#ccc"/><rect x="6" y="9" width="8" height="1.4" fill="#ccc"/></svg>
<div class="a" style="left:796px;top:95px;width:230px;height:309px;background:#4a4a4a"></div>
<div class="a" style="left:800px;top:101px;width:222px;height:284px;background:#4d4d4d;border:1px solid #383838"></div>
<div class="a" style="left:1008px;top:102px;width:13px;height:282px;background:#3a3a3a"></div>
<svg style="left:1010px;top:107px" width="9" height="6"><path d="M0 6L4.5 0L9 6Z" fill="#7a7a7a"/></svg>
<svg style="left:1010px;top:374px" width="9" height="6"><path d="M0 0L4.5 6L9 0Z" fill="#7a7a7a"/></svg>
<div class="a" style="left:801px;top:102px;width:199px;height:34px;background:#6a6a6a"></div><div class="a" style="left:801px;top:135px;width:34px;height:34px;background:#6a6a6a"></div>
<div class="cell" style="left:802px;top:103px;width:32px;height:32px"></div>
<div class="cell" style="left:835px;top:103px;width:32px;height:32px"></div>
<div class="cell" style="left:868px;top:103px;width:32px;height:32px"></div>
<div class="cell" style="left:901px;top:103px;width:32px;height:32px"></div>
<div class="cell" style="left:934px;top:103px;width:32px;height:32px"></div>
<div class="cell" style="left:967px;top:103px;width:32px;height:32px"></div>
<div class="cell" style="left:802px;top:136px;width:32px;height:32px"></div>
<div class="a" style="left:816px;top:117px;width:3px;height:3px;background:#000;border-radius:50%"></div>
<div class="a" style="left:845px;top:113px;width:11px;height:11px;background:#000;border-radius:50%"></div>
<div class="a" style="left:883px;top:116px;width:1px;height:5px;background:#999"></div>
<div class="a" style="left:903px;top:105px;width:29px;height:29px;border:1px solid #111"></div>
<div class="a" style="left:915px;top:113px;width:4px;height:9px;background:#000;border-radius:50%"></div>
<div class="a" style="left:948px;top:116px;width:3px;height:5px;background:#000;border-radius:50%"></div>
<div class="a" style="left:979px;top:110px;width:7px;height:16px;background:#000;border-radius:50%"></div>
<div class="a" style="left:814px;top:141px;width:7px;height:15px;background:#000;border-radius:50%"></div>
<div class="t" style="left:812px;top:157px;font-size:9px;color:#111">27</div>
<!-- list rows -->
<div class="a" style="left:802px;top:169px;width:204px;height:32px;background:#e3e3e3"></div>
<div class="a" style="left:807px;top:184px;width:151px;height:2px;background:#111"></div>
<div class="t" style="left:964px;top:180px;font-size:10px;color:#111">Базовая</div>
<div class="a" style="left:802px;top:202px;width:204px;height:32px;background:#e3e3e3"></div>
<svg style="left:809px;top:212px" width="18" height="10"><rect x="0" y="3" width="6" height="4" fill="#bbb" stroke="#666" stroke-width=".6"/><path d="M6 2 L12 2 L17 5 L12 8 L6 8Z" fill="#555"/></svg>
<div class="t" style="left:834px;top:213px;font-size:10px;color:#111">3,00</div>
<svg style="left:878px;top:208px" width="112" height="18"><path d="M2 7 C 25 0, 45 4, 60 9 S 95 16, 108 11" fill="none" stroke="#666" stroke-width="3.2"/></svg>
<div class="a" style="left:802px;top:235px;width:204px;height:32px;background:#e3e3e3"></div>
<svg style="left:806px;top:246px" width="196" height="8"><path d="M2 4 L194 4" stroke="#333" stroke-width="2.4" stroke-dasharray="6 1 3 1"/><path d="M3 3 L190 3.5" stroke="#555" stroke-width="1"/></svg>
<div class="a" style="left:802px;top:268px;width:204px;height:32px;background:#e3e3e3"></div>
<svg style="left:800px;top:268px" width="140" height="32"><defs><clipPath id="pc"><rect x="2" y="0" width="132" height="31"/></clipPath></defs><g clip-path="url(#pc)"><circle cx="7.3" cy="5.0" r="2" fill="#3b7fce"/><circle cx="18.0" cy="5.0" r="2" fill="#80994a"/><circle cx="28.6" cy="5.0" r="2" fill="#3b7fce"/><circle cx="12.7" cy="10.5" r="2" fill="#80994a"/><circle cx="23.3" cy="10.5" r="2" fill="#80994a"/><circle cx="34.0" cy="10.5" r="2" fill="#3b7fce"/><circle cx="7.3" cy="16.0" r="2" fill="#80994a"/><circle cx="18.0" cy="16.0" r="2" fill="#3b7fce"/><circle cx="28.6" cy="16.0" r="2" fill="#80994a"/><circle cx="12.7" cy="21.3" r="2" fill="#80994a"/><circle cx="23.3" cy="21.3" r="2" fill="#80994a"/><circle cx="34.0" cy="21.3" r="2" fill="#3b7fce"/><circle cx="7.3" cy="26.6" r="2" fill="#3b7fce"/><circle cx="18.0" cy="26.6" r="2" fill="#80994a"/><circle cx="28.6" cy="26.6" r="2" fill="#3b7fce"/><circle cx="12.7" cy="32.0" r="2" fill="#3b7fce"/><circle cx="23.3" cy="32.0" r="2" fill="#3b7fce"/><circle cx="40.3" cy="5.0" r="2" fill="#3b7fce"/><circle cx="51.0" cy="5.0" r="2" fill="#80994a"/><circle cx="61.6" cy="5.0" r="2" fill="#3b7fce"/><circle cx="45.7" cy="10.5" r="2" fill="#80994a"/><circle cx="56.3" cy="10.5" r="2" fill="#80994a"/><circle cx="67.0" cy="10.5" r="2" fill="#3b7fce"/><circle cx="40.3" cy="16.0" r="2" fill="#80994a"/><circle cx="51.0" cy="16.0" r="2" fill="#3b7fce"/><circle cx="61.6" cy="16.0" r="2" fill="#80994a"/><circle cx="45.7" cy="21.3" r="2" fill="#80994a"/><circle cx="56.3" cy="21.3" r="2" fill="#80994a"/><circle cx="67.0" cy="21.3" r="2" fill="#3b7fce"/><circle cx="40.3" cy="26.6" r="2" fill="#3b7fce"/><circle cx="51.0" cy="26.6" r="2" fill="#80994a"/><circle cx="61.6" cy="26.6" r="2" fill="#3b7fce"/><circle cx="45.7" cy="32.0" r="2" fill="#3b7fce"/><circle cx="56.3" cy="32.0" r="2" fill="#3b7fce"/><circle cx="73.3" cy="5.0" r="2" fill="#3b7fce"/><circle cx="84.0" cy="5.0" r="2" fill="#80994a"/><circle cx="94.6" cy="5.0" r="2" fill="#3b7fce"/><circle cx="78.7" cy="10.5" r="2" fill="#80994a"/><circle cx="89.3" cy="10.5" r="2" fill="#80994a"/><circle cx="100.0" cy="10.5" r="2" fill="#3b7fce"/><circle cx="73.3" cy="16.0" r="2" fill="#80994a"/><circle cx="84.0" cy="16.0" r="2" fill="#3b7fce"/><circle cx="94.6" cy="16.0" r="2" fill="#80994a"/><circle cx="78.7" cy="21.3" r="2" fill="#80994a"/><circle cx="89.3" cy="21.3" r="2" fill="#80994a"/><circle cx="100.0" cy="21.3" r="2" fill="#3b7fce"/><circle cx="73.3" cy="26.6" r="2" fill="#3b7fce"/><circle cx="84.0" cy="26.6" r="2" fill="#80994a"/><circle cx="94.6" cy="26.6" r="2" fill="#3b7fce"/><circle cx="78.7" cy="32.0" r="2" fill="#3b7fce"/><circle cx="89.3" cy="32.0" r="2" fill="#3b7fce"/><circle cx="106.3" cy="5.0" r="2" fill="#3b7fce"/><circle cx="117.0" cy="5.0" r="2" fill="#80994a"/><circle cx="127.6" cy="5.0" r="2" fill="#3b7fce"/><circle cx="111.7" cy="10.5" r="2" fill="#80994a"/><circle cx="122.3" cy="10.5" r="2" fill="#80994a"/><circle cx="133.0" cy="10.5" r="2" fill="#3b7fce"/><circle cx="106.3" cy="16.0" r="2" fill="#80994a"/><circle cx="117.0" cy="16.0" r="2" fill="#3b7fce"/><circle cx="127.6" cy="16.0" r="2" fill="#80994a"/><circle cx="111.7" cy="21.3" r="2" fill="#80994a"/><circle cx="122.3" cy="21.3" r="2" fill="#80994a"/><circle cx="133.0" cy="21.3" r="2" fill="#3b7fce"/><circle cx="106.3" cy="26.6" r="2" fill="#3b7fce"/><circle cx="117.0" cy="26.6" r="2" fill="#80994a"/><circle cx="127.6" cy="26.6" r="2" fill="#3b7fce"/><circle cx="111.7" cy="32.0" r="2" fill="#3b7fce"/><circle cx="122.3" cy="32.0" r="2" fill="#3b7fce"/></g></svg>
<div class="a" style="left:834px;top:268px;width:1px;height:3px;background:#111"></div><div class="a" style="left:867px;top:268px;width:1px;height:3px;background:#111"></div><div class="a" style="left:900px;top:268px;width:1px;height:3px;background:#111"></div><div class="a" style="left:933px;top:268px;width:1px;height:3px;background:#111"></div><div class="a" style="left:966px;top:268px;width:1px;height:3px;background:#111"></div>
<div class="a" style="left:834px;top:297px;width:1px;height:3px;background:#111"></div><div class="a" style="left:867px;top:297px;width:1px;height:3px;background:#111"></div><div class="a" style="left:900px;top:297px;width:1px;height:3px;background:#111"></div><div class="a" style="left:933px;top:297px;width:1px;height:3px;background:#111"></div><div class="a" style="left:966px;top:297px;width:1px;height:3px;background:#111"></div>
<!-- brushes footer -->
<svg style="left:804px;top:388px" width="20" height="12"><rect x="0" y="0" width="2" height="10" fill="#bbb"/><rect x="3" y="0" width="2" height="10" fill="#bbb"/><path d="M6 0 L8 0 L12 10 L10 10Z" fill="#bbb"/><path d="M13 8 L19 8 L16 11Z" fill="#bbb"/></svg>
<svg style="left:909px;top:388px" width="14" height="12"><path d="M1 1 L13 11 M13 1 L1 11" stroke="#5e5e5e" stroke-width="2"/></svg>
<svg style="left:934px;top:388px" width="12" height="12"><rect x="0.5" y="0.5" width="11" height="10" fill="none" stroke="#5e5e5e"/><path d="M3 3H9M3 5.5H9M3 8H9" stroke="#5e5e5e"/></svg>
<svg style="left:962px;top:389px" width="11" height="11"><path d="M2 0H11V11H5L0 6V3H2Z" fill="#ddd"/><path d="M0 4H6V9Z" fill="#4a4a4a"/></svg>
<svg style="left:987px;top:388px" width="12" height="13"><rect x="0" y="2" width="12" height="1.6" fill="#ccc"/><rect x="4" y="0" width="4" height="2" fill="#ccc"/><path d="M1.5 4.5H10.5L10 12.5H2Z" fill="none" stroke="#ccc" stroke-width="1.2"/><path d="M4.5 6V11M7.5 6V11" stroke="#ccc"/></svg>
<div class="a" style="left:796px;top:404px;width:230px;height:10px;background:#3a3a3a;border-top:1px solid #2a2a2a"></div>
<div class="a" style="left:900px;top:407px;width:20px;height:3px;background:repeating-linear-gradient(90deg,#111 0 1px,transparent 1px 2px)"></div>

<!-- ART BRUSHES PANEL -->
<div class="a" style="left:796px;top:414px;width:230px;height:13px;background:#3a3a3a;border-top:1px solid #2a2a2a"></div>
<svg style="left:999px;top:417px" width="8" height="7"><path d="M4 0L0 3.5L4 7Z M8 0L4 3.5L8 7Z" fill="#c8c8c8"/></svg>
<svg style="left:1013px;top:417px" width="7" height="7"><path d="M0.5 0.5L6.5 6.5M6.5 0.5L0.5 6.5" stroke="#c8c8c8" stroke-width="1.6"/></svg>
<div class="a" style="left:796px;top:427px;width:230px;height:17px;background:#3a3a3a"></div>
<div class="tab" style="left:802px;top:431px">В</div>
<div class="a" style="left:810px;top:427px;width:1px;height:17px;background:#2e2e2e"></div>
<div class="tab" style="left:815px;top:431px">В</div>
<div class="a" style="left:824px;top:427px;width:160px;height:17px;background:#4a4a4a"></div>
<div class="tab act" style="left:830px;top:431px">Художественные перья-кис...</div>
<svg style="left:1008px;top:431px" width="14" height="10"><path d="M0 2 L5 2 L2.5 5Z" fill="#ccc"/><rect x="6" y="0" width="8" height="1.4" fill="#ccc"/><rect x="6" y="3" width="8" height="1.4" fill="#ccc"/><rect x="6" y="6" width="8" height="1.4" fill="#ccc"/><rect x="6" y="9" width="8" height="1.4" fill="#ccc"/></svg>
<div class="a" style="left:796px;top:444px;width:230px;height:284px;background:#4a4a4a"></div>
<div class="a" style="left:800px;top:450px;width:221px;height:278px;background:#4d4d4d;border:1px solid #383838"></div>
<div class="a" style="left:1007px;top:451px;width:13px;height:277px;background:#3a3a3a"></div>
<svg style="left:1009px;top:455px" width="9" height="6"><path d="M0 6L4.5 0L9 6Z" fill="#7a7a7a"/></svg>
<div class="a" style="left:800px;top:450px;width:199px;height:133px;background:#6a6a6a"></div>
<div class="cell" style="left:801px;top:451px;width:32px;height:32px"></div>
<div class="cell" style="left:834px;top:451px;width:32px;height:32px"></div>
<div class="cell" style="left:867px;top:451px;width:32px;height:32px"></div>
<div class="cell" style="left:900px;top:451px;width:32px;height:32px"></div>
<div class="cell" style="left:933px;top:451px;width:32px;height:32px"></div>
<div class="cell" style="left:966px;top:451px;width:32px;height:32px"></div>
<div class="cell" style="left:801px;top:484px;width:32px;height:32px"></div>
<div class="cell" style="left:834px;top:484px;width:32px;height:32px"></div>
<div class="cell" style="left:867px;top:484px;width:32px;height:32px"></div>
<div class="cell" style="left:900px;top:484px;width:32px;height:32px"></div>
<div class="cell" style="left:933px;top:484px;width:32px;height:32px"></div>
<div class="cell" style="left:966px;top:484px;width:32px;height:32px"></div>
<div class="cell" style="left:801px;top:517px;width:32px;height:32px"></div>
<div class="cell" style="left:834px;top:517px;width:32px;height:32px"></div>
<div class="cell" style="left:867px;top:517px;width:32px;height:32px"></div>
<div class="cell" style="left:900px;top:517px;width:32px;height:32px"></div>
<div class="cell" style="left:933px;top:517px;width:32px;height:32px"></div>
<div class="cell" style="left:966px;top:517px;width:32px;height:32px"></div>
<div class="cell" style="left:801px;top:550px;width:32px;height:32px"></div>
<div class="cell" style="left:834px;top:550px;width:32px;height:32px"></div>
<div class="cell" style="left:867px;top:550px;width:32px;height:32px"></div>
<div class="cell" style="left:900px;top:550px;width:32px;height:32px"></div>
<div class="cell" style="left:933px;top:550px;width:32px;height:32px"></div>
<div class="cell" style="left:966px;top:550px;width:32px;height:32px"></div><div class="a" style="left:816.75px;top:465.5px;width:1.5px;height:4px;background:#888;border-radius:50%"></div>
<div class="a" style="left:849.5px;top:463.5px;width:2px;height:8px;background:#555;border-radius:50%"></div>
<div class="a" style="left:882.25px;top:460.0px;width:2.5px;height:15px;background:#000;border-radius:50%"></div>
<div class="a" style="left:915.5px;top:453.5px;width:2px;height:18px;background:#000;border-radius:50%"></div>
<div class="t" style="left:910.5px;top:472.5px;font-size:10px;color:#111">27</div>
<div class="a" style="left:948.5px;top:453.5px;width:2px;height:18px;background:#000;border-radius:50%"></div>
<div class="t" style="left:943.5px;top:472.5px;font-size:10px;color:#111">35</div>
<div class="a" style="left:981.5px;top:453.5px;width:2px;height:18px;background:#000;border-radius:50%"></div>
<div class="t" style="left:976.5px;top:472.5px;font-size:10px;color:#111">45</div>
<div class="a" style="left:816.5px;top:498.5px;width:2px;height:4px;background:#222;border-radius:50%"></div>
<div class="a" style="left:849.0px;top:496.5px;width:3px;height:8px;background:#000;border-radius:50%"></div>
<div class="a" style="left:881.0px;top:493.0px;width:5px;height:15px;background:#000;border-radius:50%"></div>
<div class="a" style="left:914.5px;top:487.0px;width:4px;height:17px;background:#000;border-radius:50%"></div>
<div class="t" style="left:910.5px;top:505.5px;font-size:10px;color:#111">27</div>
<div class="a" style="left:947.5px;top:487.0px;width:4px;height:17px;background:#000;border-radius:50%"></div>
<div class="t" style="left:943.5px;top:505.5px;font-size:10px;color:#111">35</div>
<div class="a" style="left:980.5px;top:487.0px;width:4px;height:17px;background:#000;border-radius:50%"></div>
<div class="t" style="left:976.5px;top:505.5px;font-size:10px;color:#111">45</div>
<div class="a" style="left:815.5px;top:531.0px;width:4px;height:5px;background:#000;border-radius:50%"></div>
<div class="a" style="left:847.5px;top:529.0px;width:6px;height:9px;background:#000;border-radius:50%"></div>
<div class="a" style="left:879.0px;top:525.5px;width:9px;height:16px;background:#000;border-radius:50%"></div>
<div class="a" style="left:912.5px;top:520.5px;width:8px;height:16px;background:#000;border-radius:50%"></div>
<div class="t" style="left:910.5px;top:538.5px;font-size:10px;color:#111">27</div>
<div class="a" style="left:945.5px;top:520.5px;width:8px;height:16px;background:#000;border-radius:50%"></div>
<div class="t" style="left:943.5px;top:538.5px;font-size:10px;color:#111">35</div>
<div class="a" style="left:978.5px;top:520.5px;width:8px;height:16px;background:#000;border-radius:50%"></div>
<div class="t" style="left:976.5px;top:538.5px;font-size:10px;color:#111">45</div>
<div class="a" style="left:835px;top:518px;width:30px;height:30px;border:1.5px solid #111"></div>
<svg style="left:801px;top:550px" width="198" height="33"><g fill="#000">
<circle cx="14" cy="8" r="2.5"/><circle cx="18" cy="11" r="2"/><circle cx="13" cy="14" r="1.8"/><circle cx="19" cy="16" r="2.2"/><circle cx="16" cy="21" r="3.5"/><circle cx="13" cy="26" r="2.5"/><circle cx="18" cy="26" r="3"/><circle cx="11" cy="18" r="1.2"/>
<circle cx="47" cy="7" r="3"/><circle cx="49" cy="12" r="2.5"/><circle cx="48" cy="17" r="3"/><circle cx="50" cy="22" r="2"/><circle cx="51" cy="26" r="3.5"/><circle cx="48" cy="27" r="2.5"/>
<circle cx="79" cy="8" r="3"/><circle cx="84" cy="9" r="2.5"/><circle cx="81" cy="14" r="3"/><circle cx="85" cy="18" r="2.5"/><circle cx="80" cy="21" r="3"/><circle cx="84" cy="25" r="3.5"/><circle cx="79" cy="27" r="2.5"/>
<circle cx="114" cy="7" r="2"/><circle cx="116" cy="12" r="2.2"/><circle cx="115" cy="17" r="2.5"/><circle cx="117" cy="22" r="2.5"/><circle cx="116" cy="27" r="2.5"/>
<circle cx="147" cy="8" r="3.5"/><circle cx="150" cy="12" r="3"/><circle cx="146" cy="16" r="3"/><circle cx="149" cy="21" r="3.5"/><circle cx="147" cy="26" r="3.5"/><circle cx="151" cy="26" r="2.5"/>
<circle cx="180" cy="8" r="3.5"/><circle cx="183" cy="13" r="3.5"/><circle cx="180" cy="18" r="4"/><circle cx="184" cy="22" r="3.5"/><circle cx="181" cy="26" r="3.5"/>
</g></svg>
<div class="a" style="left:796px;top:727px;width:230px;height:1px;background:#2a2a2a"></div>


<!-- ICON STRIP -->
<div class="a" style="left:1028px;top:78px;width:37px;height:650px;background:#4a4a4a"></div>
<div class="a" style="left:1037px;top:82px;width:20px;height:3px;background:repeating-linear-gradient(90deg,#111 0 1px,transparent 1px 2px)"></div>
<div class="a" style="left:1032px;top:89px;width:29px;height:24px;background:#353535;border-radius:4px;border:1px solid #2a2a2a"></div>
<svg style="left:1038px;top:90px" width="18" height="22"><path d="M4 12H13V21H4Z" fill="#bbb"/><path d="M8 12 L8 3" stroke="#bbb" stroke-width="2"/><path d="M6 12 L2 4 L5 3Z M10 12 L15 6 L14 4Z" fill="#aaa"/></svg>
<svg style="left:1039px;top:123px" width="17" height="12"><rect x="0" y="0" width="17" height="12" fill="#bdbdbd"/><rect x="1" y="1" width="4.5" height="4.5" fill="#222"/><rect x="6.25" y="1" width="4.5" height="4.5" fill="#555"/><rect x="11.5" y="1" width="4.5" height="4.5" fill="#8a8a8a"/><rect x="1" y="6.5" width="4.5" height="4.5" fill="#777"/><rect x="6.25" y="6.5" width="4.5" height="4.5" fill="#8f8f8f"/><rect x="11.5" y="6.5" width="4.5" height="4.5" fill="#5a5a5a"/></svg>
<svg style="left:1038px;top:147px" width="18" height="18"><g fill="#b5b5b5"><circle cx="9" cy="4.5" r="4"/><circle cx="4.5" cy="10" r="4"/><circle cx="13.5" cy="10" r="4"/><path d="M8 9 L10 9 L12 17 L6 17Z"/></g></svg>
<div class="a" style="left:1028px;top:173px;width:37px;height:2px;background:#333"></div>
<div class="a" style="left:1037px;top:179px;width:20px;height:3px;background:repeating-linear-gradient(90deg,#111 0 1px,transparent 1px 2px)"></div>
<svg style="left:1038px;top:188px" width="20" height="20"><circle cx="10" cy="10" r="8.2" fill="none" stroke="#c8c8c8" stroke-width="1.3" stroke-dasharray="2.2 1.6"/><circle cx="10" cy="10" r="6" fill="#b0b0b0"/></svg>
<svg style="left:1039px;top:218px" width="18" height="18"><rect x="5.5" y="1.5" width="11" height="11" fill="none" stroke="#bbb" stroke-width="1.3"/><rect x="1.5" y="9.5" width="6" height="6" fill="#444" stroke="#bbb" stroke-width="1.3"/><rect x="4" y="7" width="5" height="5" fill="none" stroke="#bbb"/></svg>
<div class="a" style="left:1028px;top:243px;width:37px;height:2px;background:#333"></div>
<div class="a" style="left:1037px;top:249px;width:20px;height:3px;background:repeating-linear-gradient(90deg,#111 0 1px,transparent 1px 2px)"></div>
<svg style="left:1039px;top:259px" width="17" height="15"><rect x="0" y="0" width="10" height="9" fill="#aaa" stroke="#ccc"/><rect x="6" y="5" width="10" height="9" fill="#bbb" stroke="#ddd"/></svg>
<svg style="left:1040px;top:286px" width="16" height="15"><rect x="0" y="0" width="1.6" height="15" fill="#bbb"/><rect x="3" y="2" width="9" height="4" fill="#bbb"/><rect x="3" y="8" width="13" height="5" fill="#bbb"/></svg>
<svg style="left:1040px;top:314px" width="16" height="16"><rect x="2" y="2" width="12" height="12" fill="none" stroke="#ccc" stroke-dasharray="2 1.2"/><g fill="#ccc"><rect x="0" y="0" width="3" height="3"/><rect x="13" y="0" width="3" height="3"/><rect x="0" y="13" width="3" height="3"/><rect x="13" y="13" width="3" height="3"/><rect x="7" y="7" width="2" height="2"/></g></svg>
<div class="a" style="left:1028px;top:339px;width:37px;height:2px;background:#333"></div>
<div class="a" style="left:1037px;top:345px;width:20px;height:3px;background:repeating-linear-gradient(90deg,#111 0 1px,transparent 1px 2px)"></div>
<svg style="left:1038px;top:355px" width="20" height="20"><circle cx="10" cy="10" r="8" fill="#b5b5b5"/><g fill="#888"><rect x="8" y="0" width="4" height="3"/><rect x="8" y="17" width="4" height="3"/><rect x="17" y="8" width="3" height="4"/></g></svg>
<div class="a" style="left:1028px;top:381px;width:37px;height:2px;background:#333"></div>
<div class="a" style="left:1037px;top:386px;width:20px;height:3px;background:repeating-linear-gradient(90deg,#111 0 1px,transparent 1px 2px)"></div>
<div class="a" style="left:1039px;top:398px;width:17px;height:13px;background:linear-gradient(90deg,#fff,#222);border:1px solid #ccc"></div>
<svg style="left:1039px;top:425px" width="17" height="13"><rect x="0" y="0" width="17" height="2.2" fill="#ccc"/><rect x="0" y="5" width="17" height="2.2" fill="#ccc"/><rect x="0" y="10" width="17" height="2.2" fill="#ccc"/></svg>
<div class="a" style="left:1028px;top:450px;width:37px;height:2px;background:#333"></div>

<!-- COLOR PANEL -->
<div class="a" style="left:1068px;top:78px;width:298px;height:17px;background:#3a3a3a"></div>
<div class="a" style="left:1068px;top:78px;width:44px;height:17px;background:#4a4a4a"></div>
<svg style="left:1073px;top:81px" width="6" height="11"><path d="M0.5 4 L3 1 L5.5 4 M0.5 7 L3 10 L5.5 7" fill="none" stroke="#ccc" stroke-width="1.1"/></svg>
<div class="tab act" style="left:1081px;top:82px">Цвет</div>
<div class="tab" style="left:1120px;top:82px">Каталог цветов</div>
<div class="a" style="left:1202px;top:78px;width:1px;height:17px;background:#2e2e2e"></div>
<svg style="left:1345px;top:83px" width="14" height="10"><path d="M0 2 L5 2 L2.5 5Z" fill="#ccc"/><rect x="6" y="0" width="8" height="1.4" fill="#ccc"/><rect x="6" y="3" width="8" height="1.4" fill="#ccc"/><rect x="6" y="6" width="8" height="1.4" fill="#ccc"/><rect x="6" y="9" width="8" height="1.4" fill="#ccc"/></svg>
<div class="a" style="left:1068px;top:95px;width:298px;height:245px;background:#4a4a4a"></div>
<svg style="left:1073px;top:100px" width="14" height="14"><rect x="4.5" y="4.5" width="8" height="8" fill="#222" stroke="#ccc"/><rect x="1.5" y="1.5" width="8" height="8" fill="#ddd" stroke="#222"/></svg>
<svg style="left:1092px;top:100px" width="12" height="13"><path d="M2 4 L9 4 L9 11" fill="none" stroke="#ccc" stroke-width="1.3"/><path d="M0 4 L3 1.5 L3 6.5Z M9 13 L6.5 10 L11.5 10Z" fill="#ccc"/></svg>
<div class="a" style="left:1083px;top:129px;width:20px;height:20px;background:#000;border:1px solid #ddd"></div>
<div class="a" style="left:1087px;top:133px;width:12px;height:12px;border:1.5px solid #fff"></div>
<div class="a" style="left:1073px;top:119px;width:21px;height:20px;background:#fff;border:1px solid #222"></div>
<svg style="left:1074px;top:120px" width="19" height="18"><line x1="1" y1="17" x2="18" y2="1" stroke="#e21c1c" stroke-width="2"/></svg>
<div class="t" style="left:1120px;top:108px;font-size:10px;color:#ddd">R</div>
<div class="t" style="left:1120px;top:141px;font-size:10px;color:#ddd">G</div>
<div class="t" style="left:1120px;top:174px;font-size:10px;color:#ddd">B</div>
<div class="a" style="left:1138px;top:110px;width:103px;height:6px;background:#3c3c3c;border:1px solid #2c2c2c"></div>
<div class="a" style="left:1138px;top:143px;width:103px;height:6px;background:#3c3c3c;border:1px solid #2c2c2c"></div>
<div class="a" style="left:1138px;top:176px;width:103px;height:6px;background:#3c3c3c;border:1px solid #2c2c2c"></div>
<div class="fld" style="left:1247px;top:104px;width:34px;height:19px;background:#a4a4a4"></div>
<div class="fld" style="left:1247px;top:137px;width:34px;height:19px;background:#a4a4a4"></div>
<div class="fld" style="left:1247px;top:170px;width:34px;height:19px;background:#a4a4a4"></div>
<svg style="left:1079px;top:188px" width="11" height="11"><path d="M5.5 0 L10 4 L7 4 L7 8 L11 8 L11 10 L5 10 L5 4 L1 4Z" fill="#ccc"/></svg>
<div class="a" style="left:1097px;top:187px;width:15px;height:14px;background:#d4d4d4;border:1px solid #222"></div>
<div class="a" style="left:1073px;top:209px;width:40px;height:14px;background:#fff;border:1px solid #222"></div>
<div class="a" style="left:1086px;top:210px;width:13px;height:12px;background:#000"></div>
<svg style="left:1074px;top:210px" width="12" height="12"><line x1="0" y1="12" x2="12" y2="0" stroke="#e21c1c" stroke-width="2"/></svg>
<div class="t" style="left:1283px;top:212px;font-size:10px;color:#ccc;font-weight:bold">#</div>
<div class="fld" style="left:1295px;top:207px;width:54px;height:19px;background:#a4a4a4"></div>
<div class="a" style="left:1074px;top:233px;width:274px;height:99px;border:1px solid #2a2a2a;background:linear-gradient(to bottom,rgba(255,255,255,1) 0%,rgba(255,255,255,0) 50%,rgba(0,0,0,0) 50%,rgba(0,0,0,1) 100%),linear-gradient(90deg,#f00 0%,#ff0 17%,#0f0 33%,#0ff 50%,#00f 67%,#f0f 83%,#f00 100%)"></div>
<svg style="left:1350px;top:320px" width="12" height="12"><g fill="#777"><rect x="9" y="1" width="1" height="1"/><rect x="7" y="3" width="1" height="1"/><rect x="9" y="3" width="1" height="1"/><rect x="5" y="5" width="1" height="1"/><rect x="7" y="5" width="1" height="1"/><rect x="9" y="5" width="1" height="1"/><rect x="3" y="7" width="1" height="1"/><rect x="5" y="7" width="1" height="1"/><rect x="7" y="7" width="1" height="1"/><rect x="9" y="7" width="1" height="1"/></g></svg>
<div class="a" style="left:1068px;top:340px;width:298px;height:2px;background:#2a2a2a"></div>

<!-- TRANSPARENCY PANEL -->
<div class="a" style="left:1068px;top:342px;width:298px;height:17px;background:#3a3a3a"></div>
<div class="a" style="left:1068px;top:342px;width:90px;height:17px;background:#4a4a4a"></div>
<svg style="left:1073px;top:345px" width="6" height="11"><path d="M0.5 4 L3 1 L5.5 4 M0.5 7 L3 10 L5.5 7" fill="none" stroke="#ccc" stroke-width="1.1"/></svg>
<div class="tab act" style="left:1081px;top:346px">Прозрачность</div>
<svg style="left:1346px;top:347px" width="14" height="10"><path d="M0 2 L5 2 L2.5 5Z" fill="#ccc"/><rect x="6" y="0" width="8" height="1.4" fill="#ccc"/><rect x="6" y="3" width="8" height="1.4" fill="#ccc"/><rect x="6" y="6" width="8" height="1.4" fill="#ccc"/><rect x="6" y="9" width="8" height="1.4" fill="#ccc"/></svg>
<div class="a" style="left:1068px;top:359px;width:298px;height:105px;background:#4a4a4a"></div>
<div class="btn" style="left:1074px;top:366px;width:133px;height:19px;background:#575757"></div>
<div class="t cb" style="left:1080px;top:370px">Нормальный</div>
<div class="a" style="left:1188px;top:368px;width:1px;height:15px;background:#3a3a3a"></div>
<div class="arr" style="left:1193px;top:373px"></div>
<div class="t cb" style="left:1213px;top:370px">Непрозрачность:</div>
<div class="fld" style="left:1297px;top:366px;width:47px;height:19px;background:#a8a8a8"></div>
<div class="t cb" style="left:1300px;top:370px;color:#111">100%</div>
<div class="btn" style="left:1343px;top:366px;width:15px;height:19px"></div><div class="arr" style="left:1347px;top:373px"></div>
<div class="a" style="left:1073px;top:392px;width:288px;height:1px;background:#3a3a3a"></div>
<div class="a" style="left:1074px;top:400px;width:132px;height:55px;border:1px solid #333;background:#4a4a4a"></div>
<div class="btn" style="left:1211px;top:400px;width:103px;height:18px;background:#4d4d4d;border-color:#3a3a3a"></div>
<div class="t cb" style="left:1229px;top:404px;color:#858585">Создать маску</div>
<div class="a" style="left:1211px;top:425px;width:12px;height:12px;border:1px solid #3a3a3a"></div>
<div class="t cb" style="left:1227px;top:426px;color:#858585">Обрезка</div>
<div class="a" style="left:1211px;top:445px;width:12px;height:12px;border:1px solid #3a3a3a"></div>
<div class="t cb" style="left:1227px;top:446px;color:#858585">Инверт. маска</div>
<div class="a" style="left:1068px;top:464px;width:298px;height:2px;background:#2a2a2a"></div>

<!-- LAYERS PANEL -->
<div class="a" style="left:1068px;top:466px;width:298px;height:18px;background:#3a3a3a"></div>
<div class="a" style="left:1068px;top:466px;width:39px;height:18px;background:#4a4a4a"></div>
<div class="tab act" style="left:1075px;top:471px">Слои</div>
<div class="tab" style="left:1114px;top:471px">Монтажные области</div>
<div class="a" style="left:1224px;top:466px;width:1px;height:18px;background:#2e2e2e"></div>
<svg style="left:1346px;top:471px" width="14" height="10"><path d="M0 2 L5 2 L2.5 5Z" fill="#ccc"/><rect x="6" y="0" width="8" height="1.4" fill="#ccc"/><rect x="6" y="3" width="8" height="1.4" fill="#ccc"/><rect x="6" y="6" width="8" height="1.4" fill="#ccc"/><rect x="6" y="9" width="8" height="1.4" fill="#ccc"/></svg>
<div class="a" style="left:1068px;top:484px;width:298px;height:244px;background:#4a4a4a"></div>
<div class="a" style="left:1073px;top:490px;width:287px;height:218px;background:#494949;border:1px solid #333"></div>
<div class="a" style="left:1074px;top:491px;width:285px;height:20px;background:#5b6473"></div>
<div class="a" style="left:1074px;top:511px;width:285px;height:1px;background:#333"></div>
<div class="a" style="left:1074px;top:532px;width:285px;height:1px;background:#333"></div>
<div class="a" style="left:1074px;top:553px;width:285px;height:1px;background:#333"></div>
<div class="a" style="left:1094px;top:491px;width:1px;height:63px;background:#333"></div>
<div class="a" style="left:1115px;top:491px;width:1px;height:63px;background:#333"></div>
<div class="a" style="left:1122px;top:491px;width:1px;height:63px;background:#333"></div>
<div class="a" style="left:1324px;top:491px;width:1px;height:63px;background:#333"></div>
<div class="a" style="left:1117px;top:493px;width:3px;height:16px;background:#e04848"></div>
<div class="a" style="left:1117px;top:514px;width:3px;height:16px;background:#4cd24c"></div>
<div class="a" style="left:1117px;top:535px;width:3px;height:16px;background:#4a72e0"></div>
<svg style="left:1077px;top:496px" width="14" height="9"><path d="M1 4.5 Q7 -2 13 4.5 Q7 11 1 4.5Z" fill="#ccc"/><circle cx="7" cy="4.5" r="2" fill="#333"/></svg>
<svg style="left:1077px;top:517px" width="14" height="9"><path d="M1 4.5 Q7 -2 13 4.5 Q7 11 1 4.5Z" fill="#ccc"/><circle cx="7" cy="4.5" r="2" fill="#333"/></svg>
<svg style="left:1100px;top:537px" width="10" height="12"><path d="M2.5 5 V3.5 A2.5 2.5 0 0 1 7.5 3.5 V5" fill="none" stroke="#aaa" stroke-width="1.3"/><rect x="1" y="5" width="8" height="6" fill="#aaa"/></svg>
<svg style="left:1128px;top:496px" width="6" height="9"><path d="M0 0L6 4.5L0 9Z" fill="#ddd"/></svg>
<svg style="left:1128px;top:517px" width="6" height="9"><path d="M0 0L6 4.5L0 9Z" fill="#ddd"/></svg>
<svg style="left:1128px;top:538px" width="6" height="9"><path d="M0 0L6 4.5L0 9Z" fill="#ddd"/></svg>
<div class="a" style="left:1142px;top:492px;width:19px;height:19px;background:#fff;border:1px solid #111"></div>
<svg style="left:1143px;top:493px" width="17" height="17"><path d="M6 1 L10 1 L12 4 L11 7 L14 10 L13 16 L4 16 L5 12 L3 9 L5 5Z" fill="#111"/><path d="M7 3 L9 4 L8 6Z M6 11 L9 12 L7 14Z" fill="#888"/></svg>
<div class="a" style="left:1142px;top:513px;width:19px;height:19px;background:#fff;border:1px solid #111"></div>
<svg style="left:1143px;top:514px" width="17" height="17"><rect x="6.9" y="9.2" width="1.5" height="1" fill="#aaa"/><rect x="12.3" y="8.1" width="1.5" height="1" fill="#777"/><rect x="9.8" y="14.6" width="1.5" height="1" fill="#555"/><rect x="7.1" y="4.5" width="1.5" height="1" fill="#555"/><rect x="9.3" y="9.2" width="1.5" height="1" fill="#555"/><rect x="10.1" y="3.3" width="1.5" height="1" fill="#999"/><rect x="11.9" y="8.8" width="1.5" height="1" fill="#777"/><rect x="10.4" y="2.0" width="1.5" height="1" fill="#777"/><rect x="7.4" y="1.5" width="1.5" height="1" fill="#aaa"/><rect x="8.8" y="11.8" width="1.5" height="1" fill="#555"/><rect x="10.7" y="14.8" width="1.5" height="1" fill="#555"/><rect x="10.8" y="9.7" width="1.5" height="1" fill="#999"/><rect x="12.0" y="2.5" width="1.5" height="1" fill="#999"/><rect x="9.0" y="4.9" width="1.5" height="1" fill="#555"/><rect x="11.2" y="13.8" width="1.5" height="1" fill="#555"/><rect x="9.1" y="6.8" width="1.5" height="1" fill="#aaa"/><rect x="9.3" y="7.1" width="1.5" height="1" fill="#999"/><rect x="12.2" y="11.2" width="1.5" height="1" fill="#777"/><rect x="11.9" y="15.9" width="1.5" height="1" fill="#999"/><rect x="10.6" y="5.9" width="1.5" height="1" fill="#777"/><rect x="10.7" y="4.2" width="1.5" height="1" fill="#aaa"/><rect x="7.3" y="2.0" width="1.5" height="1" fill="#555"/><rect x="5.7" y="13.0" width="1.5" height="1" fill="#555"/><rect x="12.2" y="1.3" width="1.5" height="1" fill="#555"/><rect x="11.2" y="14.1" width="1.5" height="1" fill="#777"/><rect x="9.8" y="12.4" width="1.5" height="1" fill="#555"/><rect x="10.7" y="6.0" width="1.5" height="1" fill="#aaa"/><rect x="9.0" y="16.0" width="1.5" height="1" fill="#aaa"/><rect x="5.1" y="2.6" width="1.5" height="1" fill="#777"/><rect x="12.6" y="15.6" width="1.5" height="1" fill="#aaa"/></svg>
<div class="a" style="left:1142px;top:534px;width:19px;height:19px;background:#fff;border:1px solid #111"></div>
<svg style="left:1143px;top:535px" width="17" height="17"><rect x="9.5" y="3.3" width="1.1" height="2.3" fill="#3a3c60"/><rect x="6.0" y="3.1" width="2.3" height="1.6" fill="#222"/><rect x="10.0" y="9.9" width="1.8" height="1.9" fill="#3a3c60"/><rect x="7.0" y="11.8" width="1.4" height="1.5" fill="#3a3c60"/><rect x="8.3" y="9.2" width="1.0" height="1.6" fill="#3a3c60"/><rect x="1.3" y="10.2" width="1.9" height="1.1" fill="#3a3c60"/><rect x="7.5" y="11.2" width="1.5" height="2.1" fill="#222"/><rect x="1.3" y="1.9" width="2.0" height="2.4" fill="#3a3c60"/><rect x="9.8" y="5.5" width="1.9" height="1.3" fill="#111"/><rect x="5.4" y="6.5" width="1.9" height="1.5" fill="#222"/><rect x="2.5" y="13.2" width="2.5" height="2.0" fill="#111"/><rect x="5.3" y="4.3" width="2.2" height="1.4" fill="#111"/><rect x="10.5" y="10.7" width="1.1" height="1.9" fill="#3a3c60"/><rect x="10.4" y="4.4" width="2.2" height="2.4" fill="#2a2b4a"/><rect x="5.7" y="10.8" width="2.3" height="1.7" fill="#111"/><rect x="12.0" y="1.5" width="2.4" height="1.5" fill="#111"/><rect x="13.1" y="6.1" width="2.2" height="1.1" fill="#3a3c60"/><rect x="9.3" y="7.3" width="1.8" height="2.3" fill="#222"/><rect x="5.8" y="7.3" width="1.6" height="1.6" fill="#222"/><rect x="3.2" y="1.1" width="2.4" height="2.3" fill="#222"/><rect x="8.8" y="15.8" width="2.1" height="1.0" fill="#222"/><rect x="12.7" y="10.9" width="1.8" height="1.4" fill="#3a3c60"/><rect x="13.5" y="13.9" width="2.3" height="2.5" fill="#2a2b4a"/><rect x="12.3" y="1.7" width="2.4" height="2.0" fill="#111"/><rect x="13.6" y="14.5" width="1.9" height="1.0" fill="#2a2b4a"/><rect x="3.4" y="5.5" width="2.0" height="1.8" fill="#222"/><rect x="1.7" y="14.7" width="1.2" height="1.2" fill="#222"/><rect x="12.4" y="1.9" width="1.3" height="1.2" fill="#2a2b4a"/><rect x="3.4" y="12.9" width="2.4" height="2.2" fill="#2a2b4a"/><rect x="7.8" y="9.6" width="1.6" height="2.1" fill="#111"/><rect x="4.8" y="8.9" width="1.6" height="1.7" fill="#2a2b4a"/><rect x="13.0" y="12.6" width="1.1" height="1.1" fill="#222"/><rect x="14.6" y="13.8" width="1.1" height="1.8" fill="#3a3c60"/><rect x="3.2" y="2.1" width="1.6" height="1.6" fill="#3a3c60"/><rect x="6.1" y="3.9" width="1.5" height="1.2" fill="#2a2b4a"/><rect x="11.0" y="6.7" width="1.1" height="1.3" fill="#3a3c60"/><rect x="7.5" y="10.8" width="1.8" height="2.0" fill="#2a2b4a"/><rect x="9.7" y="7.5" width="1.6" height="1.7" fill="#3a3c60"/><rect x="6.9" y="11.4" width="1.7" height="1.4" fill="#3a3c60"/><rect x="10.7" y="2.1" width="1.6" height="1.6" fill="#2a2b4a"/><rect x="14.1" y="6.6" width="2.3" height="2.2" fill="#3a3c60"/><rect x="2.7" y="11.4" width="2.4" height="2.1" fill="#222"/><rect x="10.3" y="12.0" width="1.8" height="1.2" fill="#2a2b4a"/><rect x="7.6" y="4.5" width="1.6" height="1.8" fill="#2a2b4a"/><rect x="10.2" y="6.6" width="2.2" height="1.5" fill="#2a2b4a"/><rect x="1.4" y="2.7" width="1.7" height="2.0" fill="#3a3c60"/><rect x="9.1" y="13.0" width="1.1" height="2.2" fill="#111"/><rect x="2.5" y="12.2" width="2.4" height="1.1" fill="#3a3c60"/><rect x="13.2" y="3.7" width="1.1" height="2.5" fill="#111"/><rect x="7.4" y="11.5" width="2.4" height="1.4" fill="#222"/><rect x="14.1" y="9.3" width="2.4" height="1.6" fill="#111"/><rect x="14.6" y="7.2" width="2.1" height="1.2" fill="#222"/><rect x="3.2" y="7.0" width="2.3" height="1.2" fill="#222"/><rect x="11.5" y="14.7" width="1.8" height="1.7" fill="#111"/><rect x="2.9" y="12.3" width="1.2" height="1.8" fill="#111"/><rect x="12.9" y="9.1" width="2.2" height="2.0" fill="#222"/><rect x="9.3" y="9.8" width="2.5" height="2.3" fill="#3a3c60"/><rect x="1.3" y="8.2" width="1.6" height="1.3" fill="#3a3c60"/><rect x="4.3" y="8.2" width="2.3" height="1.6" fill="#222"/><rect x="10.8" y="4.1" width="1.9" height="2.4" fill="#2a2b4a"/><rect x="7.7" y="11.8" width="2.3" height="1.6" fill="#2a2b4a"/><rect x="7.5" y="4.4" width="1.4" height="2.1" fill="#2a2b4a"/><rect x="14.4" y="13.8" width="1.4" height="1.3" fill="#3a3c60"/><rect x="2.9" y="10.3" width="2.0" height="1.1" fill="#3a3c60"/><rect x="3.4" y="1.7" width="1.3" height="1.1" fill="#2a2b4a"/><rect x="2.7" y="5.0" width="2.4" height="1.1" fill="#222"/><rect x="9.1" y="11.1" width="1.0" height="1.5" fill="#222"/><rect x="6.3" y="2.2" width="2.0" height="2.1" fill="#222"/><rect x="6.5" y="9.2" width="1.2" height="1.4" fill="#222"/><rect x="2.6" y="14.3" width="2.4" height="1.1" fill="#3a3c60"/></svg>
<div class="t cb" style="left:1166px;top:496px;font-size:10px;color:#e8e8e8">Слой 2</div>
<div class="t cb" style="left:1166px;top:517px;font-size:10px;color:#e8e8e8">Слой 3</div>
<div class="t cb" style="left:1166px;top:538px;font-size:10px;color:#e8e8e8">Слой 1</div>
<div class="a" style="left:1329px;top:496px;width:11px;height:11px;border:1.3px solid #ccc;border-radius:50%"></div>
<div class="a" style="left:1329px;top:517px;width:11px;height:11px;border:1.3px solid #ccc;border-radius:50%"></div>
<div class="a" style="left:1329px;top:538px;width:11px;height:11px;border:1.3px solid #ccc;border-radius:50%"></div>
<svg style="left:1352px;top:492px" width="6" height="6"><path d="M0 0H6V6Z" fill="#ddd"/></svg>
<div class="t cb" style="left:1073px;top:713px">3 Слои</div>
<svg style="left:1222px;top:710px" width="12" height="13"><circle cx="7.5" cy="5" r="4" fill="none" stroke="#666" stroke-width="1.4"/><line x1="5" y1="8" x2="1" y2="12" stroke="#666" stroke-width="1.6"/></svg>
<svg style="left:1246px;top:711px" width="12" height="12"><rect x="0.5" y="0.5" width="7" height="7" fill="none" stroke="#ccc"/><rect x="3.5" y="3.5" width="8" height="8" fill="#ccc" stroke="#333"/></svg>
<svg style="left:1272px;top:711px" width="16" height="12"><path d="M0 2H7V5H3V9" fill="none" stroke="#ccc" stroke-width="1.4"/><rect x="7" y="1" width="8" height="9" fill="#ccc"/><path d="M5 5 L9 2 L9 8Z" fill="#ccc"/></svg>
<svg style="left:1300px;top:711px" width="11" height="11"><path d="M2 0H11V11H5L0 6V3H2Z" fill="#ddd"/><path d="M0 4H6V9Z" fill="#4a4a4a"/></svg>
<svg style="left:1325px;top:710px" width="12" height="13"><rect x="0" y="2" width="12" height="1.6" fill="#ccc"/><rect x="4" y="0" width="4" height="2" fill="#ccc"/><path d="M1.5 4.5H10.5L10 12.5H2Z" fill="none" stroke="#ccc" stroke-width="1.2"/><path d="M4.5 6V11M7.5 6V11" stroke="#ccc"/></svg>

<!-- ============ TASKBAR ============ -->
<div class="a" style="left:0;top:728px;width:1366px;height:40px;background:linear-gradient(90deg,#1b1d21 0px,#17191d 380px,#1e2229 450px,#232730 490px,#25272b 560px,#1f2023 650px,#1a1b1e 790px,#16171a 1030px,#121317 1366px);border-top:2px solid #3a3c40"></div>
<div class="a" style="left:793px;top:730px;width:236px;height:38px;background:linear-gradient(100deg,#444 0%,#4f4f4f 25%,#5a5a5a 45%,#525252 60%,#4c4c4c 80%,#3a3a3a 100%)"></div>

<!-- taskbar buttons -->
<svg style="left:0;top:728px" width="1366" height="40">
<defs>
<radialGradient id="orb" cx=".5" cy=".45" r=".55"><stop offset="0" stop-color="#3d8fd8"/><stop offset=".7" stop-color="#1c4f8a"/><stop offset="1" stop-color="#0b2444"/></radialGradient>
<linearGradient id="btn" x1="0" y1="0" x2="0" y2="1"><stop offset="0" stop-color="#4a4d52"/><stop offset=".5" stop-color="#2c2e33"/><stop offset="1" stop-color="#1d1f23"/></linearGradient>
<linearGradient id="btnA" x1="0" y1="0" x2="1" y2="1"><stop offset="0" stop-color="#a8aaac"/><stop offset=".45" stop-color="#8a8c8e"/><stop offset=".55" stop-color="#6e7072"/><stop offset="1" stop-color="#8a8c8e"/></linearGradient>
<radialGradient id="skype" cx=".5" cy=".5" r=".5"><stop offset="0" stop-color="#27b5f0"/><stop offset="1" stop-color="#0e8fd0"/></radialGradient>
<radialGradient id="opera" cx=".4" cy=".4" r=".6"><stop offset="0" stop-color="#ff3b3b"/><stop offset="1" stop-color="#9a0a0a"/></radialGradient>
</defs>
<circle cx="27" cy="20" r="18.5" fill="url(#orb)" stroke="#0e2a4a" stroke-width="1.2"/>
<ellipse cx="27" cy="12" rx="13" ry="7" fill="#fff" opacity=".15"/>
<path d="M19 14 Q22 12 26 14 L25 20 Q21 18 18 20Z" fill="#f0542a"/>
<path d="M27 14 Q31 16 35 14 L34 20 Q30 22 26 20Z" fill="#7cc43c"/>
<path d="M18 21 Q21 19 25 21 L24 27 Q20 25 17 27Z" fill="#2ba0f0"/>
<path d="M26 21 Q30 23 34 21 L33 27 Q29 29 25 27Z" fill="#fbc02d"/>
<rect x="60.5" y="1.5" width="57" height="37" rx="2" fill="url(#btn)" stroke="#5a5d62"/>
<path d="M73 10 H84 L86 12 H106 V33 H73Z" fill="#e8cf7a"/><path d="M73 16 H106 V33 H73Z" fill="#f3df94"/>
<rect x="80" y="24" width="18" height="9" fill="#7ab8e0"/><rect x="83" y="27" width="12" height="6" fill="#f3df94"/>
<rect x="77" y="9" width="3" height="2" fill="#3c3"/><rect x="86" y="10" width="3" height="2" fill="#d33"/><rect x="94" y="13" width="3" height="2" fill="#39d"/>
<rect x="122.5" y="1.5" width="57" height="37" rx="2" fill="url(#btn)" stroke="#5a5d62"/>
<circle cx="151" cy="20" r="14" fill="#db3a2a"/>
<path d="M151 20 L163.1 13 A14 14 0 0 1 151 34Z" fill="#f6c318"/>
<path d="M151 20 L151 34 A14 14 0 0 1 138.9 13Z" fill="#2f9e44"/>
<circle cx="151" cy="20" r="6.5" fill="#fff"/><circle cx="151" cy="20" r="5" fill="#3b7de0"/>
<ellipse cx="213" cy="20" rx="13.5" ry="14.5" fill="url(#opera)"/>
<ellipse cx="213" cy="20.5" rx="4.2" ry="11" fill="#1a0808"/>
<ellipse cx="213" cy="20.5" rx="3.2" ry="10" fill="#16171b"/>
<rect x="246.5" y="1.5" width="57" height="37" rx="2" fill="url(#btn)" stroke="#5a5d62"/>
<circle cx="268" cy="13" r="8" fill="#16a3e6"/><circle cx="282" cy="27" r="8" fill="#16a3e6"/><circle cx="275" cy="20" r="13" fill="#1aa8ea"/>
<text x="275" y="27.5" font-family="Liberation Sans" font-weight="bold" font-size="21" fill="#fff" text-anchor="middle">S</text>
<rect x="308.5" y="1.5" width="57" height="37" rx="2" fill="url(#btnA)" stroke="#aaa"/>
<rect x="323.5" y="5.5" width="27" height="27" fill="#2a1a08" stroke="#f7a41e" stroke-width="2.2"/>
<text x="337" y="25" font-family="Liberation Sans" font-weight="bold" font-size="15" fill="#f0a42a" text-anchor="middle">Ai</text>
<!-- tray -->
<text x="1096" y="22" font-family="Liberation Sans" font-size="12" fill="#e8e8e8">RU</text>
<path d="M1126 21 L1130 17 L1134 21Z" fill="#ddd"/>
<rect x="1147" y="10" width="1.5" height="16" fill="#ddd"/><path d="M1149 11 H1157 V18 H1149Z" fill="#ddd"/>
<circle cx="1157" cy="22" r="4.5" fill="#d22"/><path d="M1155 20 L1159 24 M1159 20 L1155 24" stroke="#fff" stroke-width="1.2"/>
<rect x="1172" y="12" width="10" height="14" fill="#ddd" stroke="#333"/><rect x="1180" y="16" width="5" height="6" fill="#ddd"/>
<g fill="#eee"><rect x="1197" y="22" width="2" height="3"/><rect x="1200" y="20" width="2" height="5"/><rect x="1203" y="17" width="2" height="8"/><rect x="1206" y="14" width="2" height="11"/></g>
<path d="M1220 16 H1223 L1227 12 V26 L1223 22 H1220Z" fill="#eee"/><path d="M1229 15 Q1232 19 1229 23 M1231 13 Q1235 19 1231 25" fill="none" stroke="#eee"/>
<path d="M1249 10 L1256 10 L1262 21 L1258 27Z" fill="#f7c623"/><path d="M1249 10 L1243 21 L1247 27 L1252.5 16.5Z" fill="#1fa463"/><path d="M1247 27 L1258 27 L1262 21 L1250 21Z" fill="#4688f4"/>
<text x="1304" y="18" font-family="Liberation Sans" font-size="12" fill="#f0f0f0" text-anchor="middle">19:46</text>
<text x="1303" y="35" font-family="Liberation Sans" font-size="12" fill="#f0f0f0" text-anchor="middle">10.01.2015</text>
<rect x="1343.5" y="2.5" width="23" height="37" fill="#2a2d33" stroke="#555"/>
</svg>

</body></html>
